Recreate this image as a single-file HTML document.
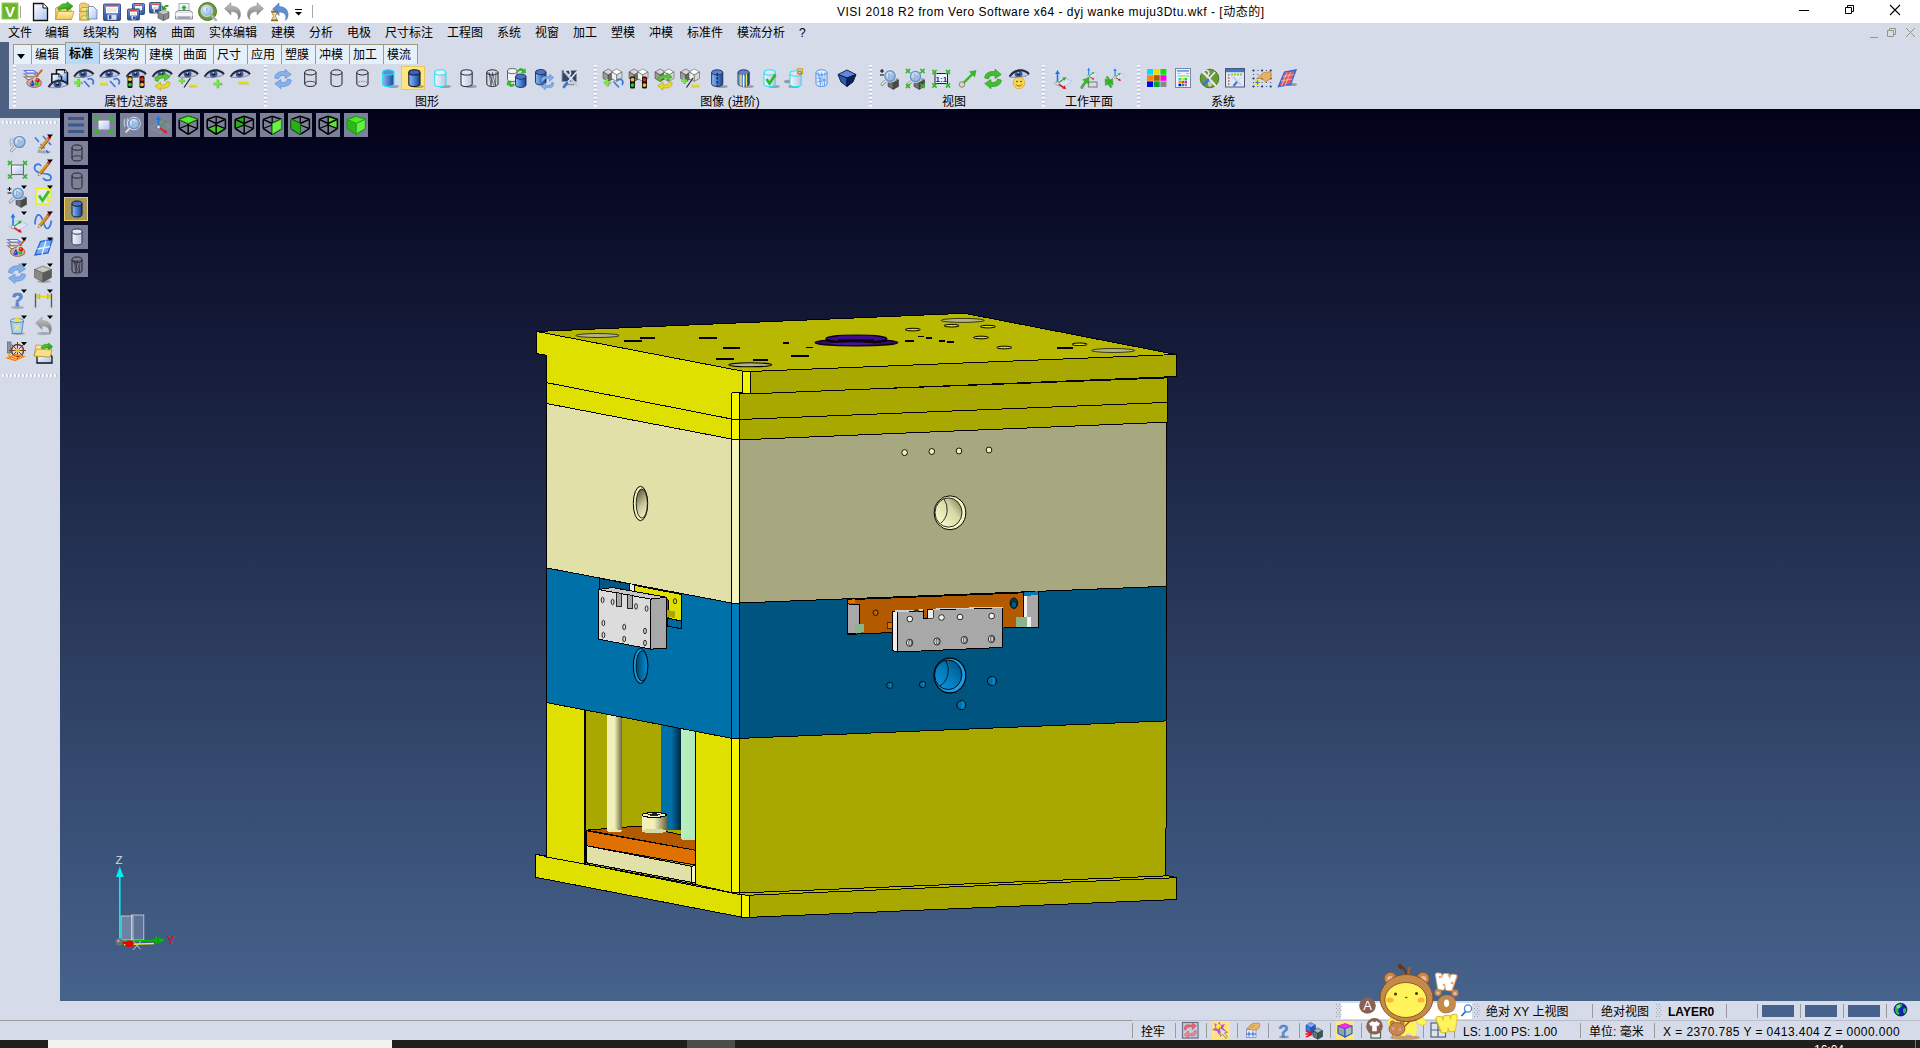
<!DOCTYPE html>
<html lang="zh"><head><meta charset="utf-8"><title>VISI 2018 R2</title><style>
*{box-sizing:border-box;margin:0;padding:0}
html,body{width:1920px;height:1048px;overflow:hidden;background:#d6dbe9}
body{position:relative;font-family:"Liberation Sans","Noto Sans CJK SC",sans-serif;font-size:12px;color:#000;line-height:1}
.abs{position:absolute}
#title{left:0;top:0;width:1920px;height:23px;background:#fff}
#title .t{position:absolute;left:837px;top:6px;font-size:12px;white-space:nowrap;letter-spacing:0.5px}
#menu{left:0;top:23px;width:1920px;height:20px;background:#d6dbe9}
#menu span{position:absolute;top:4px;white-space:nowrap;font-size:12px}
#band1{left:0;top:42px;width:9px;height:68px;background:#4d6082}
#band2{left:0;top:109px;width:60px;height:9px;background:#4d6082}
#tabs{left:13px;top:44px;height:19px}
.tab{position:absolute;top:44px;height:20px;background:#e6f0fb;border:1px solid #a09a84;border-bottom:none;font-size:12px;text-align:center;padding-top:4px;padding-right:3px;white-space:nowrap}
.tab.on{background:#bcd9f6;top:42px;height:22px;padding-top:5px;font-weight:bold}
#tb{left:9px;top:64px;width:1911px;height:45px;background:#d6dbe9}
.grip{position:absolute;width:3px;top:65px;height:42px;background-image:repeating-linear-gradient(#fbfcff 0 1px,#eceff7 1px 2px,#bcc2d2 2px 3px,#d6dbe9 3px 4px)}
.glabel{position:absolute;top:96px;font-size:12px;white-space:nowrap;transform:translateX(-50%)}
#view{left:60px;top:109px;width:1860px;height:892px;background:linear-gradient(#02011a,#46638c)}
#left{left:0;top:118px;width:60px;height:883px;background:#d6dbe9}
.hgrip{position:absolute;left:2px;width:56px;height:3px;background-image:repeating-linear-gradient(90deg,#fbfcff 0 1px,#eceff7 1px 2px,#bcc2d2 2px 3px,#d6dbe9 3px 4px)}
#status{left:0;top:1001px;width:1920px;height:39px;background:#d6dbe9}
#status span{position:absolute;white-space:nowrap;font-size:12px}
.sep{position:absolute;width:1px;background:#9a9a9a}
#task{left:0;top:1040px;width:1920px;height:8px;background:#1f1f1f}
.vb{position:absolute;width:24px;height:24px;background:#7d8099}
</style></head><body>
<div id="title" class="abs"><div class="t">VISI 2018 R2 from Vero Software x64 - dyj wanke muju3Dtu.wkf - [动态的]</div></div>
<svg class="abs" style="left:1780px;top:0" width="140" height="22" viewBox="0 0 140 22"><path d="M19 10.5h10" stroke="#000" fill="none"/><path d="M65.5 7.5h6v6h-6zM67.5 7.5v-2h6v6h-2" stroke="#000" fill="none"/><path d="M110 5l10 10M120 5l-10 10" stroke="#000" fill="none" stroke-width="1.1"/></svg>
<div id="menu" class="abs">
<span style="left:8px">文件</span>
<span style="left:45px">编辑</span>
<span style="left:83px">线架构</span>
<span style="left:133px">网格</span>
<span style="left:171px">曲面</span>
<span style="left:209px">实体编辑</span>
<span style="left:271px">建模</span>
<span style="left:309px">分析</span>
<span style="left:347px">电极</span>
<span style="left:385px">尺寸标注</span>
<span style="left:447px">工程图</span>
<span style="left:497px">系统</span>
<span style="left:535px">视窗</span>
<span style="left:573px">加工</span>
<span style="left:611px">塑模</span>
<span style="left:649px">冲模</span>
<span style="left:687px">标准件</span>
<span style="left:737px">模流分析</span>
<span style="left:799px">?</span>
</div>
<svg class="abs" style="left:1860px;top:24px" width="60" height="18" viewBox="0 0 60 18"><path d="M10 13.5h8" stroke="#9a9484" fill="none"/><path d="M27.5 6.5h6v6h-6zM29.5 6.5v-2h6v6h-2" stroke="#9a9484" fill="none"/><path d="M46 4l9 9M55 4l-9 9" stroke="#9a9484" fill="none"/></svg>
<div id="band1" class="abs"></div><div id="band2" class="abs"></div>
<div class="tab" style="left:13px;width:19px"><svg width="8" height="5" viewBox="0 0 8 5" style="margin-top:4px"><path d="M0 0h8l-4 5z" fill="#000"/></svg></div>
<div class="tab" style="left:31px;width:35px">编辑</div>
<div class="tab on" style="left:65px;width:35px">标准</div>
<div class="tab" style="left:99px;width:47px">线架构</div>
<div class="tab" style="left:145px;width:35px">建模</div>
<div class="tab" style="left:179px;width:35px">曲面</div>
<div class="tab" style="left:213px;width:35px">尺寸</div>
<div class="tab" style="left:247px;width:35px">应用</div>
<div class="tab" style="left:281px;width:35px">塑膜</div>
<div class="tab" style="left:315px;width:35px">冲模</div>
<div class="tab" style="left:349px;width:35px">加工</div>
<div class="tab" style="left:383px;width:35px">模流</div>
<div id="tb" class="abs"></div>
<div class="grip" style="left:13px"></div>
<div class="grip" style="left:264px"></div>
<div class="grip" style="left:594px"></div>
<div class="grip" style="left:869px"></div>
<div class="grip" style="left:1042px"></div>
<div class="grip" style="left:1137px"></div>
<div class="glabel" style="left:136px">属性/过滤器</div>
<div class="glabel" style="left:427px">图形</div>
<div class="glabel" style="left:730px">图像 (进阶)</div>
<div class="glabel" style="left:954px">视图</div>
<div class="glabel" style="left:1089px">工作平面</div>
<div class="glabel" style="left:1223px">系统</div>
<div id="view" class="abs"></div>
<div id="left" class="abs"><div class="hgrip" style="top:3px"></div><div class="hgrip" style="top:256px"></div></div>
<svg class="abs" style="left:60px;top:108px" width="1860" height="893" viewBox="60 108 1860 893" shape-rendering="crispEdges">
<defs><linearGradient id="gcream" x1="0" x2="1"><stop offset="0" stop-color="#f0f0b8"/><stop offset=".5" stop-color="#f0f0b8"/><stop offset="1" stop-color="#6a6a48"/></linearGradient><linearGradient id="gblue" x1="0" x2="1"><stop offset="0" stop-color="#0070a8"/><stop offset=".5" stop-color="#0070a8"/><stop offset="1" stop-color="#00283c"/></linearGradient><linearGradient id="ggreen" x1="0" x2="1"><stop offset="0" stop-color="#b8f0c0"/><stop offset="1" stop-color="#b0e8b8"/></linearGradient><linearGradient id="ghole" x1="0" x2="1"><stop offset="0" stop-color="#00486c"/><stop offset="1" stop-color="#0090d8"/></linearGradient><linearGradient id="ghole2" x1="0" x2="1"><stop offset="0" stop-color="#1098e0"/><stop offset="1" stop-color="#0068a0"/></linearGradient><linearGradient id="gbh" x1="0.2" y1="0" x2="0.6" y2="1"><stop offset="0" stop-color="#58583c"/><stop offset=".6" stop-color="#c8c898"/><stop offset="1" stop-color="#f0f0bc"/></linearGradient><linearGradient id="gbh2" x1="1" y1="0" x2="0.1" y2="0.8"><stop offset="0" stop-color="#6c6c4c"/><stop offset=".45" stop-color="#d8d8a4"/><stop offset="1" stop-color="#f8f8c8"/></linearGradient><linearGradient id="ghole3" x1="1" y1="0" x2="0.1" y2="0.9"><stop offset="0" stop-color="#004870"/><stop offset=".5" stop-color="#0078b8"/><stop offset="1" stop-color="#1490d8"/></linearGradient></defs>
<polygon points="535.6,854.4 741.6,894.9 741.6,917.1 535.6,877.3" fill="#e0e000" stroke="#000" stroke-width="1" />
<polygon points="749.6,895.2 1176.4,877.7 1176.4,899.5 749.6,917.3" fill="#a8a800" stroke="#000" stroke-width="1" />
<polygon points="741.6,894.9 749.6,895.2 749.6,917.3 741.6,917.1" fill="#f4f400" stroke="#000" stroke-width="1" />
<polygon points="535.6,854.4 547.0,856.0 731.8,891.6 739.8,892.0 1165.0,875.0 1176.4,877.7 749.6,895.2 741.6,894.9" fill="#b8b800" stroke="#000" stroke-width="1" />
<polygon points="584.8,709.9 695.8,731.4 695.8,884.6 584.8,864.0" fill="#a8a800" stroke="#000" stroke-width="1" />
<polygon points="586.4,845.7 691.7,866.3 691.7,882.3 586.4,862.8" fill="#e0e0a8" stroke="#000" stroke-width="1" />
<polygon points="691.7,866.3 695.8,865.5 695.8,883.0 691.7,882.3" fill="#f4f4bc" stroke="#000" stroke-width="1" />
<polygon points="586.4,830.1 640.0,826.0 695.8,838.0 695.8,850.3" fill="#b35a00" stroke="#000" stroke-width="1" />
<polygon points="586.4,830.8 695.8,850.3 695.8,865.1 586.4,845.7" fill="#e07000" stroke="#000" stroke-width="1" />
<rect x="607" y="714" width="14.9" height="116.8" fill="url(#gcream)" stroke="none"/>
<rect x="661.3" y="724.7" width="19.7" height="105" fill="url(#gblue)" stroke="none"/>
<rect x="681" y="728.5" width="14.8" height="110.3" fill="url(#ggreen)" stroke="none"/>
<ellipse cx="688.4" cy="838.8" rx="7.4" ry="1.6" fill="#b0e8b8" />
<ellipse cx="614.4" cy="830.8" rx="7.4" ry="1.4" fill="#e8e8b0" />
<rect x="642" y="815" width="24.5" height="16" fill="url(#gcream)" stroke="none"/>
<ellipse cx="654.2" cy="831.0" rx="12.2" ry="2.2" fill="#d8d8a0" />
<ellipse cx="654.2" cy="815.0" rx="12.2" ry="2.4" fill="#f0f0b8" stroke="#000" stroke-width="1" />
<ellipse cx="654.2" cy="814.6" rx="6.0" ry="1.2" fill="#222" />
<polygon points="546.9,702.6 584.8,709.9 584.8,864.0 546.9,857.1" fill="#e0e000" stroke="#000" stroke-width="1" />
<polygon points="695.8,731.4 731.6,738.3 731.6,892.6 695.8,884.6" fill="#e0e000" stroke="#000" stroke-width="1" />
<line x1="585.6" y1="710.0" x2="585.6" y2="864.0" stroke="#000" stroke-width="1.6"/>
<polygon points="546.9,568.0 731.6,603.0 731.6,738.3 546.9,702.6" fill="#0070a8" stroke="#000" stroke-width="1" />
<polygon points="546.9,403.6 731.6,439.0 731.6,603.0 546.9,568.0" fill="#e0e0a8" stroke="#000" stroke-width="1" />
<polygon points="546.9,355.3 731.6,392.1 731.6,419.0 546.9,382.7" fill="#e0e000" />
<line x1="546.9" y1="355.3" x2="546.9" y2="382.7" stroke="#000" stroke-width="1"/>
<line x1="731.6" y1="392.5" x2="731.6" y2="419.0" stroke="#000" stroke-width="1"/>
<polygon points="546.9,382.7 731.6,419.0 731.6,439.0 546.9,403.6" fill="#e0e000" stroke="#000" stroke-width="1" />
<polygon points="731.6,392.1 739.6,392.5 739.6,439.9 731.6,439.0" fill="#f4f400" stroke="#000" stroke-width="1" />
<line x1="731.6" y1="419.2" x2="739.6" y2="419.5" stroke="#000" stroke-width="1"/>
<polygon points="731.6,439.0 739.6,439.9 739.6,603.0 731.6,603.0" fill="#f4f4bc" stroke="#000" stroke-width="1" />
<polygon points="731.6,603.0 739.6,603.0 739.6,738.4 731.6,738.3" fill="#007cbc" stroke="#000" stroke-width="1" />
<polygon points="731.6,738.3 739.6,738.4 739.6,893.0 731.6,892.6" fill="#f4f400" stroke="#000" stroke-width="1" />
<polygon points="739.6,393.9 1167.0,377.9 1167.0,402.4 739.6,419.5" fill="#a8a800" stroke="#000" stroke-width="1" />
<polygon points="739.6,419.5 1167.0,402.4 1167.0,422.2 739.6,439.9" fill="#a8a800" stroke="#000" stroke-width="1" />
<polygon points="739.6,439.9 1167.0,422.2 1166.7,586.3 739.6,603.0" fill="#a8a880" stroke="#000" stroke-width="1" />
<polygon points="739.6,603.0 1166.7,586.3 1166.5,720.9 739.6,738.4" fill="#005480" stroke="#000" stroke-width="1" />
<polygon points="739.6,738.4 1166.5,720.9 1165.8,875.9 739.8,893.0" fill="#a8a800" stroke="#000" stroke-width="1" />
<polygon points="536.8,331.5 742.8,371.2 742.8,393.2 731.6,392.6 546.9,355.8 536.8,353.6" fill="#e0e000" />
<polyline points="731.6,392.5 742.8,392.5 742.8,371.2 536.8,331.5 536.8,353.6 546.9,355.4 546.9,358" fill="none" stroke="#000" stroke-width="1"/>
<polygon points="750.2,371.5 1176.1,354.5 1176.1,376.5 750.2,393.9" fill="#a8a800" stroke="#000" stroke-width="1" />
<polygon points="742.8,371.2 750.2,371.5 750.2,393.9 742.8,393.9" fill="#f4f400" stroke="#000" stroke-width="1" />
<polygon points="536.8,331.5 964.5,313.3 1176.1,354.5 750.2,371.5 742.8,371.2" fill="#b8b800" stroke="#000" stroke-width="1" />
<g shape-rendering="auto">
<ellipse cx="597.5" cy="335.5" rx="21.5" ry="2.0" fill="#b4b48c" stroke="#000" stroke-width="0.7" />
<ellipse cx="597.5" cy="335.5" rx="21.5" ry="2.0" fill="none" stroke="#d8d800" stroke-width="0.0" />
<ellipse cx="750.3" cy="364.8" rx="21.5" ry="2.0" fill="#b4b48c" stroke="#000" stroke-width="1.1" />
<ellipse cx="750.3" cy="364.8" rx="21.5" ry="2.0" fill="none" stroke="#d8d800" stroke-width="0.0" />
<ellipse cx="962.7" cy="320.4" rx="21.5" ry="2.0" fill="#b4b48c" stroke="#000" stroke-width="0.7" />
<ellipse cx="962.7" cy="320.4" rx="21.5" ry="2.0" fill="none" stroke="#d8d800" stroke-width="0.0" />
<ellipse cx="1113.2" cy="350.5" rx="21.5" ry="2.0" fill="#b4b48c" stroke="#000" stroke-width="0.7" />
<ellipse cx="1113.2" cy="350.5" rx="21.5" ry="2.0" fill="none" stroke="#d8d800" stroke-width="0.0" />
<rect x="640.0" y="337.0" width="15.0" height="1.7" fill="#000" shape-rendering="crispEdges"/>
<rect x="624.0" y="340.0" width="17.7" height="1.7" fill="#000" shape-rendering="crispEdges"/>
<rect x="699.0" y="337.0" width="17.7" height="1.7" fill="#000" shape-rendering="crispEdges"/>
<rect x="723.0" y="347.0" width="17.0" height="1.7" fill="#000" shape-rendering="crispEdges"/>
<rect x="716.0" y="358.0" width="17.8" height="1.7" fill="#000" shape-rendering="crispEdges"/>
<rect x="753.3" y="358.9" width="14.7" height="1.7" fill="#000" shape-rendering="crispEdges"/>
<rect x="791.0" y="355.0" width="17.8" height="1.7" fill="#000" shape-rendering="crispEdges"/>
<rect x="783.3" y="342.2" width="5.5" height="1.7" fill="#000" shape-rendering="crispEdges"/>
<rect x="806.0" y="346.5" width="6.8" height="1.7" fill="#000" shape-rendering="crispEdges"/>
<rect x="905.0" y="339.9" width="9.0" height="1.7" fill="#000" shape-rendering="crispEdges"/>
<rect x="918.0" y="335.5" width="6.0" height="1.7" fill="#000" shape-rendering="crispEdges"/>
<rect x="926.0" y="337.2" width="6.0" height="1.7" fill="#000" shape-rendering="crispEdges"/>
<rect x="939.0" y="339.9" width="6.0" height="1.7" fill="#000" shape-rendering="crispEdges"/>
<rect x="947.0" y="341.3" width="7.0" height="1.7" fill="#000" shape-rendering="crispEdges"/>
<rect x="1057.0" y="347.0" width="16.0" height="1.7" fill="#000" shape-rendering="crispEdges"/>
<ellipse cx="912.8" cy="329.6" rx="7.5" ry="1.3" fill="#e0e000" stroke="#000" stroke-width="1.0" />
<ellipse cx="951.6" cy="325.7" rx="7.5" ry="1.3" fill="#e0e000" stroke="#000" stroke-width="1.0" />
<ellipse cx="987.9" cy="326.6" rx="7.5" ry="1.3" fill="#e0e000" stroke="#000" stroke-width="1.0" />
<ellipse cx="981.0" cy="337.5" rx="7.5" ry="1.3" fill="#e0e000" stroke="#000" stroke-width="1.0" />
<ellipse cx="1004.3" cy="347.5" rx="7.5" ry="1.3" fill="#e0e000" stroke="#000" stroke-width="1.0" />
<ellipse cx="1079.6" cy="344.3" rx="7.5" ry="1.3" fill="#e0e000" stroke="#000" stroke-width="1.0" />
<ellipse cx="856.4" cy="342.6" rx="41.4" ry="3.3" fill="#34086c" stroke="#000" stroke-width="1.2" />
<ellipse cx="856.4" cy="338.6" rx="30.5" ry="3.6" fill="#420a8e" stroke="#000" stroke-width="1.2" />
<path d="M826 339.5 C835 343.5 878 343.5 887 339.5 L887 341 C878 345 835 345 826 341Z" fill="#000"/>
<rect x="838" y="339.4" width="36" height="2.2" fill="#000"/>
<ellipse cx="852.0" cy="343.6" rx="22.0" ry="1.3" fill="#4a10a0" />
<ellipse cx="640.5" cy="503.5" rx="7.2" ry="17.2" fill="#f4f4c0" stroke="#000" stroke-width="1" />
<ellipse cx="641.8" cy="503.5" rx="5.6" ry="14.6" fill="url(#gbh)" stroke="#000" stroke-width="0.8" />
<ellipse cx="950.0" cy="512.8" rx="15.8" ry="17.0" fill="#f4f4c0" stroke="#000" stroke-width="1" />
<ellipse cx="948.5" cy="512.5" rx="13.5" ry="14.6" fill="url(#gbh2)" stroke="#000" stroke-width="0.8" />
<path d="M944 499a18 18 0 0 1 -3 24" fill="none" stroke="#000" stroke-width="0.8"/>
<ellipse cx="904.6" cy="452.6" rx="2.8" ry="3.0" fill="#f0f0bc" stroke="#000" stroke-width="0.9" />
<ellipse cx="931.8" cy="451.5" rx="2.8" ry="3.0" fill="#f0f0bc" stroke="#000" stroke-width="0.9" />
<ellipse cx="959.0" cy="451.0" rx="2.8" ry="3.0" fill="#f0f0bc" stroke="#000" stroke-width="0.9" />
<ellipse cx="989.0" cy="450.0" rx="2.8" ry="3.0" fill="#f0f0bc" stroke="#000" stroke-width="0.9" />
<ellipse cx="640.6" cy="665.9" rx="7.3" ry="17.6" fill="#1098e0" stroke="#000" stroke-width="1" />
<ellipse cx="642.0" cy="665.9" rx="5.8" ry="15.2" fill="url(#ghole)" stroke="#000" stroke-width="0.8" />
<ellipse cx="949.9" cy="675.5" rx="15.9" ry="17.4" fill="#1c9ce4" stroke="#000" stroke-width="1.2" />
<ellipse cx="948.2" cy="674.8" rx="13.6" ry="14.8" fill="url(#ghole3)" stroke="#000" stroke-width="0.9" />
<path d="M946 661a19 19 0 0 1 -6 25" fill="none" stroke="#000" stroke-width="0.8"/>
<ellipse cx="889.6" cy="685.4" rx="3.0" ry="3.0" fill="#0070a8" stroke="#000" stroke-width="1.0" />
<path d="M890.1 682.4a2.4 3.0 0 0 1 0 6.0" fill="#0088cc" stroke="#000" stroke-width=".6"/>
<ellipse cx="922.4" cy="684.5" rx="3.0" ry="3.0" fill="#0070a8" stroke="#000" stroke-width="1.0" />
<path d="M922.9 681.5a2.4 3.0 0 0 1 0 6.0" fill="#0088cc" stroke="#000" stroke-width=".6"/>
<ellipse cx="991.9" cy="681.0" rx="4.5" ry="4.5" fill="#0070a8" stroke="#000" stroke-width="1.0" />
<path d="M992.4 676.5a3.6 4.5 0 0 1 0 9.0" fill="#0088cc" stroke="#000" stroke-width=".6"/>
<ellipse cx="961.3" cy="705.1" rx="4.5" ry="4.5" fill="#0070a8" stroke="#000" stroke-width="1.0" />
<path d="M961.8 700.6a3.6 4.5 0 0 1 0 9.0" fill="#0088cc" stroke="#000" stroke-width=".6"/>
</g>
<polygon points="599.2,578.2 629.7,583.9 629.7,600.0 599.2,595.0" fill="#005888" stroke="#000" stroke-width="1" />
<polygon points="629.7,584.0 634.5,585.0 634.5,600.0 629.7,599.0" fill="#f0f0f0" />
<polygon points="634.5,585.4 681.2,594.4 681.2,628.7 668.0,626.0 668.0,600.0 634.5,594.0" fill="#e0e000" stroke="#000" stroke-width="1" />
<polygon points="667.0,610.0 675.0,611.5 675.0,618.0 667.0,616.5" fill="#a8a800" />
<polygon points="667.0,618.0 681.2,621.0 681.2,628.7 667.0,626.0" fill="#0068a0" stroke="#000" stroke-width="1" />
<polygon points="598.6,589.6 650.7,599.1 650.7,649.1 598.6,639.2" fill="#dcdcdc" stroke="#000" stroke-width="1" />
<polygon points="650.7,599.1 666.5,597.2 666.5,648.4 650.7,649.1" fill="#a8a8a8" stroke="#000" stroke-width="1" />
<polygon points="598.6,589.6 612.0,587.5 666.5,597.2 650.7,599.1" fill="#c8c8c8" stroke="#000" stroke-width="1" />
<polygon points="616.0,592.5 621.0,593.4 621.0,607.0 616.0,606.0" fill="#a8a8a8" stroke="#000" stroke-width="0.8" />
<polygon points="627.0,594.5 632.0,595.4 632.0,609.0 627.0,608.0" fill="#a8a8a8" stroke="#000" stroke-width="0.8" />
<g shape-rendering="auto">
<ellipse cx="602.6" cy="600.0" rx="1.4" ry="2.8" fill="#dcdcdc" stroke="#000" stroke-width="0.8" />
<ellipse cx="612.6" cy="602.0" rx="1.4" ry="2.8" fill="#dcdcdc" stroke="#000" stroke-width="0.8" />
<ellipse cx="636.0" cy="606.4" rx="1.4" ry="2.8" fill="#dcdcdc" stroke="#000" stroke-width="0.8" />
<ellipse cx="646.6" cy="608.6" rx="1.4" ry="2.8" fill="#dcdcdc" stroke="#000" stroke-width="0.8" />
<ellipse cx="603.4" cy="623.0" rx="1.4" ry="2.8" fill="#dcdcdc" stroke="#000" stroke-width="0.8" />
<ellipse cx="624.2" cy="627.0" rx="1.4" ry="2.8" fill="#dcdcdc" stroke="#000" stroke-width="0.8" />
<ellipse cx="645.0" cy="631.0" rx="1.4" ry="2.8" fill="#dcdcdc" stroke="#000" stroke-width="0.8" />
<ellipse cx="603.4" cy="635.0" rx="1.4" ry="2.8" fill="#dcdcdc" stroke="#000" stroke-width="0.8" />
<ellipse cx="624.2" cy="639.0" rx="1.4" ry="2.8" fill="#dcdcdc" stroke="#000" stroke-width="0.8" />
<ellipse cx="645.0" cy="643.0" rx="1.4" ry="2.8" fill="#dcdcdc" stroke="#000" stroke-width="0.8" />
<ellipse cx="675.0" cy="601.2" rx="1.6" ry="2.6" fill="#e0e000" stroke="#000" stroke-width="0.8" />
</g>
<polygon points="847.6,599.7 1023.2,592.8 1023.2,627.2 847.6,634.4" fill="#b35a00" stroke="#000" stroke-width="1" />
<polygon points="847.6,603.9 859.6,604.9 859.6,632.5 847.6,634.0" fill="#a8a8a8" stroke="#000" stroke-width="1" />
<polygon points="847.6,599.7 855.0,599.4 855.0,602.5 847.6,603.0" fill="#e07000" />
<polygon points="854.5,624.0 863.5,623.6 863.5,632.4 854.5,632.8" fill="#8cb48c" />
<polygon points="1023.7,594.4 1038.0,592.8 1038.0,627.2 1023.7,627.2" fill="#a8a8a8" stroke="#000" stroke-width="1" />
<polygon points="1023.7,594.4 1027.0,594.2 1027.0,620.0 1023.7,620.0" fill="#f0f0f0" />
<polygon points="1023.7,592.6 1038.0,591.2 1038.0,595.0 1023.7,596.0" fill="#0078b8" />
<polygon points="1016.0,617.5 1027.0,617.0 1027.0,626.6 1016.0,627.2" fill="#8cb48c" />
<polygon points="1027.0,617.5 1031.0,617.3 1031.0,626.8 1027.0,626.8" fill="#f0f0f0" />
<polygon points="887.0,623.0 893.0,622.8 893.0,628.0 887.0,628.2" fill="#e07000" stroke="#000" stroke-width="0.6" />
<polygon points="897.8,611.9 923.0,611.0 923.0,618.5 927.5,618.3 927.5,609.8 1002.7,607.7 1002.7,647.4 897.8,652.0" fill="#a8a8a8" stroke="#000" stroke-width="1" />
<polygon points="892.0,611.2 897.8,611.9 897.8,652.0 892.0,650.5" fill="#ececec" stroke="#000" stroke-width="1" />
<polygon points="892.0,611.2 897.0,610.2 923.0,609.2 923.0,611.0 897.8,611.9" fill="#d0d0d0" />
<polygon points="927.5,609.8 933.0,609.6 933.0,618.0 927.5,618.3" fill="#ececec" stroke="#000" stroke-width="0.6" />
<polygon points="933.0,608.6 1002.0,606.5 1002.7,607.7 933.0,609.7" fill="#d0d0d0" />
<g shape-rendering="auto">
<ellipse cx="909.8" cy="619.0" rx="2.8" ry="2.8" fill="#f4f4f4" stroke="#000" stroke-width="0.8" />
<ellipse cx="941.5" cy="617.5" rx="2.8" ry="2.8" fill="#f4f4f4" stroke="#000" stroke-width="0.8" />
<ellipse cx="960.0" cy="617.0" rx="2.8" ry="2.8" fill="#f4f4f4" stroke="#000" stroke-width="0.8" />
<ellipse cx="991.7" cy="616.0" rx="2.8" ry="2.8" fill="#f4f4f4" stroke="#000" stroke-width="0.8" />
<ellipse cx="909.6" cy="642.8" rx="3.2" ry="3.6" fill="#f4f4f4" stroke="#000" stroke-width="0.8" />
<ellipse cx="910.2" cy="642.8" rx="1.6" ry="3.0" fill="#c8c8c8" stroke="#000" stroke-width="0.6" />
<ellipse cx="937.0" cy="641.5" rx="3.2" ry="3.6" fill="#f4f4f4" stroke="#000" stroke-width="0.8" />
<ellipse cx="937.6" cy="641.5" rx="1.6" ry="3.0" fill="#c8c8c8" stroke="#000" stroke-width="0.6" />
<ellipse cx="964.3" cy="640.0" rx="3.2" ry="3.6" fill="#f4f4f4" stroke="#000" stroke-width="0.8" />
<ellipse cx="964.9" cy="640.0" rx="1.6" ry="3.0" fill="#c8c8c8" stroke="#000" stroke-width="0.6" />
<ellipse cx="991.5" cy="639.0" rx="3.2" ry="3.6" fill="#f4f4f4" stroke="#000" stroke-width="0.8" />
<ellipse cx="992.1" cy="639.0" rx="1.6" ry="3.0" fill="#c8c8c8" stroke="#000" stroke-width="0.6" />
<ellipse cx="875.6" cy="612.8" rx="2.5" ry="2.8" fill="#c86400" stroke="#000" stroke-width="0.8" />
<ellipse cx="1013.9" cy="603.2" rx="3.8" ry="5.2" fill="#003c5c" stroke="#000" stroke-width="0.8" />
<ellipse cx="1013.9" cy="604.6" rx="2.8" ry="3.4" fill="#005c8c" stroke="#000" stroke-width="0.6" />
<ellipse cx="916.5" cy="610.5" rx="2.6" ry="1.6" fill="#5a2c00" />
</g>
<g shape-rendering="auto">
<rect x="121" y="916" width="12" height="24" fill="#a8b0c8" fill-opacity=".45" stroke="#d8d8d8" stroke-width="0.8"/>
<rect x="131.5" y="915" width="12.3" height="25" fill="#a8b0c8" fill-opacity=".28" stroke="#d8d8d8" stroke-width="0.8"/>
<line x1="119.8" y1="875.0" x2="119.8" y2="941.0" stroke="#00f0f0" stroke-width="1.6"/>
<polygon points="119.8,866.5 116,877 123.8,877" fill="#00f0f0"/>
<line x1="124.0" y1="944.5" x2="154.0" y2="943.5" stroke="#f0f000" stroke-width="1.6"/>
<line x1="122.0" y1="941.6" x2="158.0" y2="940.4" stroke="#00c000" stroke-width="1.8"/>
<polygon points="165,940.2 155.5,936.2 155.5,944.6" fill="#00c000"/>
<polygon points="157.5,935.5 157.5,945 159,940.2" fill="#008800"/>
<line x1="120.0" y1="942.0" x2="130.0" y2="944.0" stroke="#e00000" stroke-width="2.2"/>
<ellipse cx="129.5" cy="943.8" rx="4.2" ry="3.4" fill="#f00000" />
<circle cx="119.2" cy="941.9" r="3.6" fill="#707070"/><circle cx="118.3" cy="940.9" r="1.3" fill="#a8a8a8"/>
<path d="M133.5 941.5l7 8M141 941l-8 9" stroke="#d0d0d0" stroke-width="0.9" fill="none"/>
<text x="115.4" y="864" font-family="Liberation Sans,sans-serif" font-size="11.5" fill="#d8d8d8">Z</text>
<text x="166.8" y="944" font-family="Liberation Sans,sans-serif" font-size="11.5" fill="#f00000">Y</text>
</g>
</svg>
<div id="status" class="abs">
<div class="abs" style="left:0;top:19px;width:1132px;height:1px;background:#9a9a9a"></div>
<div class="abs" style="left:1132px;top:19px;width:788px;height:1px;background:#b8bccb"></div>
<div class="abs" style="left:1341px;top:2px;width:131px;height:16px;background:#fff"></div>
<span style="left:1486px;top:5px">绝对 XY 上视图</span>
<span style="left:1601px;top:5px">绝对视图</span>
<span style="left:1668px;top:5px;font-weight:bold">LAYER0</span>
<div class="sep" style="left:1592px;top:3px;height:14px"></div>
<div class="sep" style="left:1726px;top:3px;height:14px"></div>
<div class="sep" style="left:1757px;top:3px;height:14px"></div>
<div class="sep" style="left:1800px;top:3px;height:14px"></div>
<div class="sep" style="left:1843px;top:3px;height:14px"></div>
<div class="sep" style="left:1886px;top:3px;height:14px"></div>
<div class="abs" style="left:1762px;top:4px;width:32px;height:12px;background:#45618c"></div>
<div class="abs" style="left:1805px;top:4px;width:32px;height:12px;background:#45618c"></div>
<div class="abs" style="left:1848px;top:4px;width:32px;height:12px;background:#45618c"></div>
<span style="left:1141px;top:25px">拴牢</span>
<span style="left:1463px;top:25px">LS: 1.00 PS: 1.00</span>
<span style="left:1589px;top:25px">单位: 毫米</span>
<span style="left:1663px;top:25px;letter-spacing:.43px">X = 2370.785 Y = 0413.404 Z = 0000.000</span>
<div class="sep" style="left:1132px;top:22px;height:15px"></div>
<div class="sep" style="left:1175px;top:22px;height:15px"></div>
<div class="sep" style="left:1206px;top:22px;height:15px"></div>
<div class="sep" style="left:1237px;top:22px;height:15px"></div>
<div class="sep" style="left:1268px;top:22px;height:15px"></div>
<div class="sep" style="left:1299px;top:22px;height:15px"></div>
<div class="sep" style="left:1330px;top:22px;height:15px"></div>
<div class="sep" style="left:1361px;top:22px;height:15px"></div>
<div class="sep" style="left:1392px;top:22px;height:15px"></div>
<div class="sep" style="left:1423px;top:22px;height:15px"></div>
<div class="sep" style="left:1454px;top:22px;height:15px"></div>
<div class="sep" style="left:1580px;top:22px;height:15px"></div>
<div class="sep" style="left:1654px;top:22px;height:15px"></div>
</div>
<div id="task" class="abs"><div class="abs" style="left:48px;top:0;width:344px;height:8px;background:#f2f2f2"></div><div class="abs" style="left:687px;top:0;width:48px;height:8px;background:#4c4c4c"></div><div class="abs" style="left:1915px;top:0;width:1px;height:8px;background:#777"></div><div class="abs" style="left:1814px;top:4px;color:#fff;font-size:12px;white-space:nowrap">16:04</div></div>
<svg class="abs" style="left:0;top:0;pointer-events:none" width="1920" height="1048" viewBox="0 0 1920 1048">
<defs><linearGradient id="cb" x1="0" x2="1"><stop offset="0" stop-color="#8fb8f0"/><stop offset=".45" stop-color="#4f86d8"/><stop offset="1" stop-color="#1d3f86"/></linearGradient><linearGradient id="cw" x1="0" x2="1"><stop offset="0" stop-color="#f4f7ff"/><stop offset="1" stop-color="#b8c4e0"/></linearGradient><linearGradient id="cy2" x1="0" x2="1"><stop offset="0" stop-color="#dcdca0"/><stop offset=".5" stop-color="#c8c880"/><stop offset="1" stop-color="#6a6a4a"/></linearGradient><linearGradient id="pg" x1="0" y1="0" x2="1" y2="1"><stop offset="0" stop-color="#ffffff"/><stop offset="1" stop-color="#a9c3f2"/></linearGradient><linearGradient id="pgb" x1="0" y1="0" x2="1" y2="1"><stop offset="0" stop-color="#ffffff"/><stop offset=".35" stop-color="#dce8fc"/><stop offset="1" stop-color="#4a80e0"/></linearGradient><linearGradient id="fl" x1="0" y1="0" x2="0" y2="1"><stop offset="0" stop-color="#6f93d8"/><stop offset="1" stop-color="#2c4f9c"/></linearGradient><linearGradient id="gr" x1="0" y1="0" x2="1" y2="1"><stop offset="0" stop-color="#58e638"/><stop offset="1" stop-color="#189010"/></linearGradient><linearGradient id="fo" x1="0" y1="0" x2="0" y2="1"><stop offset="0" stop-color="#fff0a8"/><stop offset="1" stop-color="#f0c860"/></linearGradient><linearGradient id="gy" x1="0" y1="0" x2="0" y2="1"><stop offset="0" stop-color="#c8c8c8"/><stop offset="1" stop-color="#707070"/></linearGradient><radialGradient id="gl" cx=".4" cy=".35" r=".7"><stop offset="0" stop-color="#e8f4ff"/><stop offset="1" stop-color="#7aa6dc"/></radialGradient></defs>
<rect x="2" y="3" width="16" height="16" fill="#6cb52d"/><rect x="2" y="3" width="16" height="16" fill="none" stroke="#8fd04a" stroke-width="1"/>
<text x="10" y="16.5" text-anchor="middle" font-family="Liberation Sans,sans-serif" font-weight="bold" font-size="15" fill="#fff">V</text>
<path d="M20.5 6v12M312.5 5v13" stroke="#a8a8a8"/>
<path d="M33.5 3.5h9.5l4.5 4.5v12.5h-14z" fill="url(#pg)" stroke="#111" stroke-width="1.3"/><path d="M43.0 3.5v4.5h4.5" fill="#fff" stroke="#111" stroke-width="1"/>
<path d="M55.5 19.5v-11l1.5-1.5h5l1.5 1.5h7.5v11z" fill="#f0cc70" stroke="#c09a38" stroke-width=".7"/><path d="M55.5 19.5l2.5-8h16l-2.5 8z" fill="url(#fo)" stroke="#b08a28" stroke-width=".7"/>
<path d="M58 9c1-4 5-6 9-5.2l0-2 6 4.5-6 4.5 0-2.4c-3-.6-5.5 0-7 2z" fill="url(#gr)" stroke="#157a10" stroke-width=".6"/>
<path d="M79.5 11.5v-7l1.5-1.5h5l1.5 1.5h1.5v7z" fill="#f0cc70" stroke="#c09a38" stroke-width=".7"/><path d="M79.5 11.5l2.5-4h10l-2.5 4z" fill="url(#fo)" stroke="#b08a28" stroke-width=".7"/><path d="M79.5 20v-7l1.5-1.5h5l1.5 1.5h1.5v7z" fill="#f0cc70" stroke="#c09a38" stroke-width=".7"/><path d="M79.5 20l2.5-4h10l-2.5 4z" fill="url(#fo)" stroke="#b08a28" stroke-width=".7"/>
<path d="M88.5 6.5h5l3.5 3.5v9h-8.5z" fill="url(#pg)" stroke="#6a7a98" stroke-width=".8"/><path d="M87 8.5v10.5h3" fill="none" stroke="#58c040" stroke-width="1"/>
<rect x="103.5" y="4" width="17" height="16.5" rx="1" fill="url(#fl)" stroke="#22386e" stroke-width=".8"/><rect x="106.0" y="5" width="12" height="8.25" fill="#fff"/><rect x="106.0" y="5" width="12" height="1.6" fill="#e04a3a"/><path d="M107.0 9h10M107.0 11h10" stroke="#b9c2d8" stroke-width=".7"/><rect x="107.5" y="14.56" width="9" height="5.28" fill="#d8dde8"/><rect x="109.0" y="15.22" width="2.4" height="3.96" fill="#2c4f9c"/>
<rect x="132.5" y="3.5" width="12" height="11" rx="1" fill="url(#fl)" stroke="#22386e" stroke-width=".8"/><rect x="135.0" y="4.5" width="7" height="5.5" fill="#fff"/><rect x="135.0" y="4.5" width="7" height="1.6" fill="#e04a3a"/><path d="M136.0 8.5h5M136.0 10.5h5" stroke="#b9c2d8" stroke-width=".7"/><rect x="136.5" y="10.54" width="4" height="3.52" fill="#d8dde8"/><rect x="138.0" y="10.98" width="2.4" height="2.6399999999999997" fill="#2c4f9c"/><rect x="127.5" y="9" width="12" height="11" rx="1" fill="url(#fl)" stroke="#22386e" stroke-width=".8"/><rect x="130.0" y="10" width="7" height="5.5" fill="#fff"/><rect x="130.0" y="10" width="7" height="1.6" fill="#e04a3a"/><path d="M131.0 14h5M131.0 16h5" stroke="#b9c2d8" stroke-width=".7"/><rect x="131.5" y="16.04" width="4" height="3.52" fill="#d8dde8"/><rect x="133.0" y="16.48" width="2.4" height="2.6399999999999997" fill="#2c4f9c"/>
<rect x="149.5" y="2.5" width="11.5" height="10.5" rx="1" fill="url(#fl)" stroke="#22386e" stroke-width=".8"/><rect x="152.0" y="3.5" width="6.5" height="5.25" fill="#fff"/><rect x="152.0" y="3.5" width="6.5" height="1.6" fill="#e04a3a"/><path d="M153.0 7.5h4.5M153.0 9.5h4.5" stroke="#b9c2d8" stroke-width=".7"/><rect x="153.5" y="9.219999999999999" width="3.5" height="3.36" fill="#d8dde8"/><rect x="155.0" y="9.64" width="2.4" height="2.52" fill="#2c4f9c"/>
<path d="M163 9.5c1-3 3.5-4 5.5-3.5M163 9.5l-.8-3.6M163 9.5l3.4-1" stroke="#2aa020" stroke-width="1.6" fill="none"/>
<path d="M158 12l5.5-2 5.5 2v6l-5.5 2.6-5.5-2.6z" fill="#8a8a8a" stroke="#444" stroke-width=".6"/><path d="M158 12l5.5 2.4 5.5-2.4M163.5 14.4v6" stroke="#444" stroke-width=".6" fill="none"/><path d="M158 12l5.5-2 5.5 2-5.5 2.4z" fill="#c4c4c4"/>
<rect x="179" y="3.5" width="10" height="9" fill="#eef2fa" stroke="#8a94a8" stroke-width=".7"/><path d="M184 5l3 3.2h-1.8v2.6h-2.4v-2.600h-1.800z" fill="#2cb820"/>
<path d="M175.500 12.500l2.500-2h12l2.500 2v6.500h-17z" fill="#e0e2e8" stroke="#70757f" stroke-width=".8"/><rect x="175.500" y="13" width="17" height="3" fill="#f6f7fa"/><rect x="177.500" y="16.500" width="13" height="2" fill="#9a9ea8"/>
<circle cx="207.500" cy="11.500" r="9" fill="#6a9a3a"/><circle cx="207.500" cy="11.500" r="9" fill="none" stroke="#4a7a22" stroke-width="1"/><circle cx="206.800" cy="10.800" r="5.600" fill="url(#gl)" stroke="#c8d0d8" stroke-width="1.400"/><path d="M211 15.200l5 5" stroke="#b0b4ba" stroke-width="2.600" stroke-linecap="round"/><path d="M206.800 8v3.200" stroke="#6a8ab8" stroke-width=".8"/>
<path d="M224.500 8.500l6.500-6v3.600c6 0 10 3.400 9.500 9.400-.4 2.400-1.600 3.600-2.600 4.200 1.600-4.600-1-8.400-6.900-8.200v3.600z" fill="url(#gy)" stroke="#8a8a8a" stroke-width=".5"/>
<path d="M263.500 8.500l-6.500-6v3.600c-6 0-10 3.400-9.500 9.400.4 2.400 1.600 3.600 2.600 4.200-1.600-4.600 1-8.400 6.900-8.200v3.600z" fill="url(#gy)" stroke="#8a8a8a" stroke-width=".5"/>
<path d="M272.500 9l6.500-6v3.600c6 0 9.500 3.400 9 9.400-.4 2.400-1.600 3.600-2.600 4.200 1.600-4.600-.6-8.400-6.400-8.200v3.600z" fill="#5f8fd8" stroke="#3a68b0" stroke-width=".5"/>
<path d="M271 11.500h7M271 20.500h7" stroke="#8a6a20" stroke-width="1.600"/><path d="M272 12.300h5c0 2.600-1.600 2.900-1.600 3.800s1.600 1.200 1.600 3.700h-5c0-2.500 1.600-2.800 1.600-3.700s-1.600-1.200-1.600-3.800z" fill="#e8d8a0" stroke="#8a6a20" stroke-width=".7"/>
<path d="M295 9.500h7" stroke="#000" stroke-width="1"/><path d="M295 12h7l-3.500 3.500z" fill="#000"/>
<g transform="translate(23.5,68)"><path d="M.8 2.500h9.500l3.700 2.600h-10z" fill="#eef2ff" stroke="#6c6cf8" stroke-width="1.100"/><path d="M.8 5.700h9.500l3.700 2.600h-10z" fill="#f4f4f4" stroke="#808080" stroke-width="1.100"/><path d="M.8 8.900h9.500l3.700 2.600h-10z" fill="#f4f4f4" stroke="#808080" stroke-width="1.100"/><ellipse cx="11.500" cy="17.300" rx="7" ry="1.500" fill="#50586a" opacity=".35"/><ellipse cx="10.600" cy="14.800" rx="7.300" ry="4.600" fill="#d8a888" stroke="#8a5040" stroke-width=".8"/><circle cx="8.700" cy="16.200" r="2.100" fill="#1040f0"/><circle cx="8.200" cy="15.600" r=".8" fill="#60a0ff"/><circle cx="13.300" cy="15.500" r="2" fill="#10c020"/><circle cx="12.900" cy="15" r=".7" fill="#80ff80"/><circle cx="14.100" cy="12.400" r="2.100" fill="#d81818"/><circle cx="13.700" cy="11.800" r=".8" fill="#ff8080"/><path d="M18.200 2.300l-5.700 6.500" stroke="#c06810" stroke-width="1.800" stroke-linecap="round"/><path d="M12.500 8.800l-3 3.800" stroke="#d0d0d0" stroke-width="1.700"/><path d="M9.500 12.600l-1 1.300" stroke="#303030" stroke-width="1.500"/></g>
<g transform="translate(48,68)"><path d="M8.500 1.800h8l3 3v10.500h-11z" fill="url(#pgb)" stroke="#111" stroke-width="1.500"/><path d="M3.800 6h7l2.800 2.800v8h-9.800z" fill="url(#pgb)" stroke="#111" stroke-width="1.500"/><path d="M10.800 6v2.800h2.800" fill="#f4f4ec" stroke="#111" stroke-width=".8"/><path d="M16.500 1.800v3h3" fill="#f4f4ec" stroke="#111" stroke-width=".8"/><g transform="translate(0,11.700000000000001) scale(1,.88)"><path d="M0.3 8.4C3 4 7 1.4 11 1.3C15 1.4 18.5 3.6 20 5.6C17.500 7.800 13.500 9 9.500 9C5.500 9.200 2 9 0.3 8.400Z" fill="#c4c8ec"/><circle cx="9.600" cy="5.300" r="3.900" fill="#3c5c92"/><circle cx="9.500" cy="5.400" r="1.600" fill="#141c34"/><circle cx="9.300" cy="3.900" r="1" fill="#a8c8ff"/><path d="M0.6 8.200C3.300 3.500 7 1.100 11 1C15 1.100 18.400 3.200 20 5.600" fill="none" stroke="#222a3c" stroke-width="2.100"/><path d="M10 .5l.3-1M12.500 .7l.8-1.100M15 1.600l1.100-1M17 2.800l1.400-.7M18.600 4.300l1.400-.3" stroke="#222a3c" stroke-width=".9" fill="none"/><path d="M0.4 8.600C4 9.600 14 9.600 19.500 6.200" fill="none" stroke="#7a6078" stroke-width=".7"/></g></g>
<g transform="translate(73.5,68)"><g transform="translate(0,1.4) scale(1,.88)"><path d="M0.3 8.4C3 4 7 1.4 11 1.3C15 1.4 18.5 3.6 20 5.6C17.500 7.800 13.500 9 9.500 9C5.500 9.200 2 9 0.3 8.400Z" fill="#c4c8ec"/><circle cx="9.600" cy="5.300" r="3.900" fill="#3c5c92"/><circle cx="9.500" cy="5.400" r="1.600" fill="#141c34"/><circle cx="9.300" cy="3.900" r="1" fill="#a8c8ff"/><path d="M0.6 8.200C3.300 3.500 7 1.100 11 1C15 1.100 18.400 3.200 20 5.600" fill="none" stroke="#222a3c" stroke-width="2.100"/><path d="M10 .5l.3-1M12.500 .7l.8-1.100M15 1.600l1.100-1M17 2.800l1.400-.7M18.600 4.300l1.400-.3" stroke="#222a3c" stroke-width=".9" fill="none"/><path d="M0.4 8.600C4 9.600 14 9.600 19.500 6.200" fill="none" stroke="#7a6078" stroke-width=".7"/></g><path d="M1.1 15.1h8.0M5.1 11.1v8.0" stroke="#4a5a48" stroke-width="2.4" fill="none" opacity=".6"/><path d="M0.5 14.5h8.0M4.5 10.5v8.0" stroke="#70ee38" stroke-width="2.4" fill="none"/><path d="M10.5 13l5.5 6M14.0 11.5c4-2.5 7.5 1 5 5" stroke="#3a7be0" stroke-width="1.7" fill="none"/></g>
<g transform="translate(99.5,68)"><g transform="translate(0,1.4) scale(1,.88)"><path d="M0.3 8.4C3 4 7 1.4 11 1.3C15 1.4 18.5 3.6 20 5.6C17.500 7.800 13.500 9 9.500 9C5.500 9.200 2 9 0.3 8.400Z" fill="#c4c8ec"/><circle cx="9.600" cy="5.300" r="3.900" fill="#3c5c92"/><circle cx="9.500" cy="5.400" r="1.600" fill="#141c34"/><circle cx="9.300" cy="3.900" r="1" fill="#a8c8ff"/><path d="M0.6 8.200C3.300 3.500 7 1.100 11 1C15 1.100 18.400 3.200 20 5.600" fill="none" stroke="#222a3c" stroke-width="2.100"/><path d="M10 .5l.3-1M12.500 .7l.8-1.100M15 1.600l1.100-1M17 2.800l1.400-.7M18.600 4.300l1.400-.3" stroke="#222a3c" stroke-width=".9" fill="none"/><path d="M0.4 8.600C4 9.600 14 9.600 19.500 6.200" fill="none" stroke="#7a6078" stroke-width=".7"/></g><path d="M0.7000000000000002 16.3h7.6" stroke="#8a8a3a" stroke-width="2" opacity=".45"/><path d="M0.7000000000000002 15.5h7.6" stroke="#e6e600" stroke-width="2" fill="none"/><path d="M10.5 13l5.5 6M14.0 11.5c4-2.5 7.5 1 5 5" stroke="#3a7be0" stroke-width="1.7" fill="none"/></g>
<g transform="translate(126,68)"><g transform="translate(0,1.4) scale(1,.88)"><path d="M0.3 8.4C3 4 7 1.4 11 1.3C15 1.4 18.5 3.6 20 5.6C17.500 7.800 13.500 9 9.500 9C5.500 9.200 2 9 0.3 8.400Z" fill="#c4c8ec"/><circle cx="9.600" cy="5.300" r="3.900" fill="#3c5c92"/><circle cx="9.500" cy="5.400" r="1.600" fill="#141c34"/><circle cx="9.300" cy="3.900" r="1" fill="#a8c8ff"/><path d="M0.6 8.200C3.300 3.500 7 1.100 11 1C15 1.100 18.400 3.200 20 5.600" fill="none" stroke="#222a3c" stroke-width="2.100"/><path d="M10 .5l.3-1M12.500 .7l.8-1.100M15 1.600l1.100-1M17 2.800l1.400-.7M18.600 4.300l1.400-.3" stroke="#222a3c" stroke-width=".9" fill="none"/><path d="M0.4 8.600C4 9.600 14 9.600 19.500 6.200" fill="none" stroke="#7a6078" stroke-width=".7"/></g><rect x="1.5" y="8" width="5" height="12" rx="1.5" fill="#111"/><circle cx="4.0" cy="11.2" r="1.900" fill="#f0c020"/><circle cx="4.0" cy="16.6" r="1.900" fill="#20d020"/><rect x="13.5" y="8" width="5" height="12" rx="1.5" fill="#111"/><circle cx="16.0" cy="11.2" r="1.900" fill="#e02020"/><circle cx="16.0" cy="16.6" r="1.900" fill="#f0c020"/></g>
<g transform="translate(152,68)"><g transform="translate(0,1.4) scale(1,.88)"><path d="M0.3 8.4C3 4 7 1.4 11 1.3C15 1.4 18.5 3.6 20 5.6C17.500 7.800 13.500 9 9.500 9C5.500 9.200 2 9 0.3 8.400Z" fill="#c4c8ec"/><circle cx="9.600" cy="5.300" r="3.900" fill="#3c5c92"/><circle cx="9.500" cy="5.400" r="1.600" fill="#141c34"/><circle cx="9.300" cy="3.900" r="1" fill="#a8c8ff"/><path d="M0.6 8.200C3.300 3.500 7 1.100 11 1C15 1.100 18.400 3.200 20 5.600" fill="none" stroke="#222a3c" stroke-width="2.100"/><path d="M10 .5l.3-1M12.500 .7l.8-1.100M15 1.600l1.100-1M17 2.800l1.400-.7M18.600 4.300l1.400-.3" stroke="#222a3c" stroke-width=".9" fill="none"/><path d="M0.4 8.600C4 9.600 14 9.600 19.500 6.200" fill="none" stroke="#7a6078" stroke-width=".7"/></g><g transform="translate(10.5,13.5)"><path d="M-7.5 -1C-7.5 -6 -3 -7.5 2 -6.5L2 -9.0L7.5 -4.500L2 -0.500L2 -3.500C-2 -4 -4 -2.500 -4.500 0Z" fill="#58c830" stroke="#2a8a18" stroke-width=".5"/><path d="M7.5 1C7.5 6 3 7.5 -2 6.5L-2 9.0L-7.5 4.500L-2 0.500L-2 3.500C2 4 4 2.500 4.500 0Z" fill="#e8dc20" stroke="#a09010" stroke-width=".5"/></g></g>
<g transform="translate(178,68)"><g transform="translate(0,1.4) scale(1,.88)"><path d="M0.3 8.4C3 4 7 1.4 11 1.3C15 1.4 18.5 3.6 20 5.6C17.500 7.800 13.500 9 9.500 9C5.500 9.200 2 9 0.3 8.400Z" fill="#c4c8ec"/><circle cx="9.600" cy="5.300" r="3.900" fill="#3c5c92"/><circle cx="9.500" cy="5.400" r="1.600" fill="#141c34"/><circle cx="9.300" cy="3.900" r="1" fill="#a8c8ff"/><path d="M0.6 8.200C3.300 3.500 7 1.100 11 1C15 1.100 18.400 3.200 20 5.600" fill="none" stroke="#222a3c" stroke-width="2.100"/><path d="M10 .5l.3-1M12.500 .7l.8-1.100M15 1.600l1.100-1M17 2.800l1.400-.7M18.600 4.300l1.400-.3" stroke="#222a3c" stroke-width=".9" fill="none"/><path d="M0.4 8.600C4 9.600 14 9.600 19.500 6.200" fill="none" stroke="#7a6078" stroke-width=".7"/></g><path d="M1.1 13.1h6M4.1 10.1v6" stroke="#4a5a48" stroke-width="1.8" fill="none" opacity=".6"/><path d="M0.5 12.5h6M3.5 9.5v6" stroke="#70ee38" stroke-width="1.8" fill="none"/><path d="M6 19.500l6.500-9.500" stroke="#222" stroke-width="1.200"/><path d="M11 18.3h8" stroke="#8a8a3a" stroke-width="2" opacity=".45"/><path d="M11 17.5h8" stroke="#e6e600" stroke-width="2" fill="none"/></g>
<g transform="translate(204,68)"><g transform="translate(0,1.4) scale(1,.88)"><path d="M0.3 8.4C3 4 7 1.4 11 1.3C15 1.4 18.5 3.6 20 5.6C17.500 7.800 13.500 9 9.500 9C5.500 9.200 2 9 0.3 8.400Z" fill="#c4c8ec"/><circle cx="9.600" cy="5.300" r="3.900" fill="#3c5c92"/><circle cx="9.500" cy="5.400" r="1.600" fill="#141c34"/><circle cx="9.300" cy="3.900" r="1" fill="#a8c8ff"/><path d="M0.6 8.200C3.300 3.500 7 1.100 11 1C15 1.100 18.400 3.200 20 5.600" fill="none" stroke="#222a3c" stroke-width="2.100"/><path d="M10 .5l.3-1M12.500 .7l.8-1.100M15 1.600l1.100-1M17 2.800l1.400-.7M18.600 4.300l1.400-.3" stroke="#222a3c" stroke-width=".9" fill="none"/><path d="M0.4 8.600C4 9.600 14 9.600 19.500 6.200" fill="none" stroke="#7a6078" stroke-width=".7"/></g><path d="M9.9 16.1h8.4M14.1 11.9v8.4" stroke="#4a5a48" stroke-width="2.2" fill="none" opacity=".6"/><path d="M9.3 15.5h8.4M13.5 11.3v8.4" stroke="#70ee38" stroke-width="2.2" fill="none"/></g>
<g transform="translate(230,68)"><g transform="translate(0,1.4) scale(1,.88)"><path d="M0.3 8.4C3 4 7 1.4 11 1.3C15 1.4 18.5 3.6 20 5.6C17.500 7.800 13.500 9 9.500 9C5.500 9.200 2 9 0.3 8.400Z" fill="#c4c8ec"/><circle cx="9.600" cy="5.300" r="3.900" fill="#3c5c92"/><circle cx="9.500" cy="5.400" r="1.600" fill="#141c34"/><circle cx="9.300" cy="3.900" r="1" fill="#a8c8ff"/><path d="M0.6 8.200C3.300 3.500 7 1.100 11 1C15 1.100 18.400 3.200 20 5.600" fill="none" stroke="#222a3c" stroke-width="2.100"/><path d="M10 .5l.3-1M12.500 .7l.8-1.100M15 1.600l1.100-1M17 2.800l1.400-.7M18.600 4.300l1.400-.3" stroke="#222a3c" stroke-width=".9" fill="none"/><path d="M0.4 8.600C4 9.600 14 9.600 19.500 6.200" fill="none" stroke="#7a6078" stroke-width=".7"/></g><path d="M8.5 15.3h10" stroke="#8a8a3a" stroke-width="2.2" opacity=".45"/><path d="M8.5 14.5h10" stroke="#e6e600" stroke-width="2.2" fill="none"/></g>
<g transform="translate(283,79)"><path d="M-8.3 -1C-8.3 -6 -3 -8.3 2 -7.300000000000001L2 -9.8L8.3 -4.500L2 -0.500L2 -3.500C-2 -4 -4 -2.500 -4.500 0Z" fill="#86b0e8" stroke="#4a7cc8" stroke-width=".5"/><path d="M8.3 1C8.3 6 3 8.3 -2 7.300000000000001L-2 9.8L-8.3 4.500L-2 0.500L-2 3.500C2 4 4 2.500 4.500 0Z" fill="#86b0e8" stroke="#4a7cc8" stroke-width=".5"/></g>
<path d="M304.7 72.39999999999999v11.5a5.65 2.6 0 0 0 11.3 0v-11.5" fill="none" stroke="#222" stroke-width="1"/><ellipse cx="310.34999999999997" cy="72.39999999999999" rx="5.65" ry="2.6" fill="none" stroke="#222" stroke-width="1"/><path d="M304.7 83.9a5.65 2.6 0 0 1 11.3 0" fill="none" stroke="#222" stroke-width="0.8"/>
<path d="M331 72.39999999999999v11.5a5.5 2.6 0 0 0 11 0v-11.5" fill="none" stroke="#222" stroke-width="1"/><ellipse cx="336.5" cy="72.39999999999999" rx="5.5" ry="2.6" fill="none" stroke="#222" stroke-width="1"/>
<path d="M356.8 72.39999999999999v11.5a5.6 2.6 0 0 0 11.2 0v-11.5" fill="none" stroke="#222" stroke-width="1"/><ellipse cx="362.40000000000003" cy="72.39999999999999" rx="5.6" ry="2.6" fill="none" stroke="#222" stroke-width="1"/><path d="M356.800 83.900a5.600 2.600 0 0 1 11.200 0" fill="none" stroke="#555" stroke-width=".7" stroke-dasharray="1.500 1"/>
<ellipse cx="393" cy="86.5" rx="6" ry="1.6" fill="#50586a" opacity=".45"/><path d="M382.7 72.39999999999999v11.5a5.6 2.6 0 0 0 11.2 0v-11.5" fill="url(#cb)" stroke="#20e0f0" stroke-width="1.1"/><ellipse cx="388.3" cy="72.39999999999999" rx="5.6" ry="2.6" fill="#5a8ad8" stroke="#20e0f0" stroke-width="1.1"/>
<rect x="401.500" y="66.500" width="23" height="23" fill="#ffe680" stroke="#e8c860" stroke-width="1"/>
<ellipse cx="418" cy="86.5" rx="6" ry="1.6" fill="#50586a" opacity=".45"/><path d="M408.8 72.39999999999999v11.5a5.6 2.6 0 0 0 11.2 0v-11.5" fill="url(#cb)" stroke="#101828" stroke-width="1.1"/><ellipse cx="414.40000000000003" cy="72.39999999999999" rx="5.6" ry="2.6" fill="#3a62b8" stroke="#101828" stroke-width="1.1"/>
<ellipse cx="445" cy="86.5" rx="6" ry="1.6" fill="#50586a" opacity=".45"/><path d="M434.7 72.39999999999999v11.5a5.6 2.6 0 0 0 11.2 0v-11.5" fill="url(#cw)" stroke="#30e0f0" stroke-width="1.1"/><ellipse cx="440.3" cy="72.39999999999999" rx="5.6" ry="2.6" fill="#e8eefc" stroke="#30e0f0" stroke-width="1.1"/>
<ellipse cx="471" cy="86.5" rx="6" ry="1.6" fill="#50586a" opacity=".45"/><path d="M461 72.39999999999999v11.5a5.6 2.6 0 0 0 11.2 0v-11.5" fill="url(#cw)" stroke="#303848" stroke-width="1.1"/><ellipse cx="466.6" cy="72.39999999999999" rx="5.6" ry="2.6" fill="#e0e6f6" stroke="#303848" stroke-width="1.1"/>
<path d="M486.8 72.39999999999999v11.5a5.6 2.6 0 0 0 11.2 0v-11.5" fill="none" stroke="#222" stroke-width="1"/><ellipse cx="492.40000000000003" cy="72.39999999999999" rx="5.6" ry="2.6" fill="none" stroke="#222" stroke-width="1"/><path d="M489 72.500l2 13M492.500 72.500l-1.500 13.500M492.500 72.500l3 13M496 72l-.5 13.500M489 72.500l5 13" stroke="#222" stroke-width=".6" fill="none"/>
<path d="M507.5 71.1v7.8a4.75 2.6 0 0 0 9.5 0v-7.8" fill="#f0f2f8" stroke="#555" stroke-width="0.9"/><ellipse cx="512.25" cy="71.1" rx="4.75" ry="2.6" fill="#f0f2f8" stroke="#555" stroke-width="0.9"/><path d="M515.5 76.6v8.3a5.25 2.6 0 0 0 10.5 0v-8.3" fill="url(#cb)" stroke="#1a2c58" stroke-width="0.9"/><ellipse cx="520.75" cy="76.6" rx="5.25" ry="2.6" fill="#4a72c8" stroke="#1a2c58" stroke-width="0.9"/>
<path d="M517.500 70.500c2-2.500 5-2.500 6.500-.5l1.200-1.200.3 4.200-4.200-.3 1.200-1.200c-1.200-1.200-2.800-1.200-3.800.200z" fill="#30c020" stroke="#189010" stroke-width=".4"/><path d="M514.500 85c-2 2.500-5 2-6-.5l-1.500.8.500-4 3.800 1-1.300.9c.8 1.300 2.200 1.500 3.300.600z" fill="#30c020" stroke="#189010" stroke-width=".4"/>
<path d="M535.5 72.1v10.3a5.25 2.6 0 0 0 10.5 0v-10.3" fill="url(#cb)" stroke="#1a2c58" stroke-width="0.9"/><ellipse cx="540.75" cy="72.1" rx="5.25" ry="2.6" fill="#4a72c8" stroke="#1a2c58" stroke-width="0.9"/><g transform="translate(547.5,82)"><path d="M-6.2 -1C-6.2 -6 -3 -6.2 2 -5.2L2 -7.7L6.2 -4.500L2 -0.500L2 -3.500C-2 -4 -4 -2.500 -4.500 0Z" fill="#86b0e8" stroke="#4a7cc8" stroke-width=".5"/><path d="M6.2 1C6.2 6 3 6.2 -2 5.2L-2 7.7L-6.2 4.500L-2 0.500L-2 3.500C2 4 4 2.500 4.500 0Z" fill="#86b0e8" stroke="#4a7cc8" stroke-width=".5"/></g>
<g transform="translate(560.5,68)"><rect x="1.500" y="2.500" width="14.500" height="11" fill="#34446c" stroke="#8a92a8" stroke-width="1"/><path d="M3 16.500h11" stroke="#8a92a8" stroke-width="1.500"/><path d="M5 4.500l11 12.500" stroke="#c8ccd4" stroke-width="2.600" stroke-linecap="round"/><path d="M4 5a3 3 0 1 1 3.500 2.500" fill="none" stroke="#dfe2e8" stroke-width="1.600"/><path d="M16.500 3.500l-10 11.500" stroke="#e8eaf0" stroke-width="1.500"/><path d="M6.500 15l-3 4" stroke="#3a78d8" stroke-width="2.800" stroke-linecap="round"/></g>
<g transform="translate(603,68)"><path d="M0 3.9400000000000004l5.25 -2.9400000000000004l5.25 2.9400000000000004l-5.25 2.9400000000000004z" fill="#d8d8d8" stroke="#333" stroke-width=".5"/><path d="M0 3.9400000000000004l5.25 2.9400000000000004v6.51l-5.25 -2.9400000000000004z" fill="#9a9a9a" stroke="#333" stroke-width=".5"/><path d="M10.5 3.9400000000000004l-5.25 2.9400000000000004v6.51l5.25 -2.9400000000000004z" fill="#6a6a6a" stroke="#333" stroke-width=".5"/><path d="M8.5 3.9400000000000004l5.25 -2.9400000000000004l5.25 2.9400000000000004l-5.25 2.9400000000000004z" fill="#ffffff" stroke="#444" stroke-width=".5"/><path d="M8.5 3.9400000000000004l5.25 2.9400000000000004v6.51l-5.25 -2.9400000000000004z" fill="#f0f0f0" stroke="#444" stroke-width=".5"/><path d="M19.0 3.9400000000000004l-5.25 2.9400000000000004v6.51l5.25 -2.9400000000000004z" fill="#d8d8d8" stroke="#444" stroke-width=".5"/><path d="M1.2000000000000002 15.1h6.8M4.6 11.7v6.8" stroke="#4a5a48" stroke-width="2.4" fill="none" opacity=".6"/><path d="M0.6000000000000001 14.5h6.8M4 11.1v6.8" stroke="#70ee38" stroke-width="2.4" fill="none"/><path d="M10.5 13.5l5.5 6M14.0 12.0c4-2.5 7.5 1 5 5" stroke="#3a7be0" stroke-width="1.7" fill="none"/></g>
<g transform="translate(629,68)"><path d="M0 3.9400000000000004l5.25 -2.9400000000000004l5.25 2.9400000000000004l-5.25 2.9400000000000004z" fill="#d8d8d8" stroke="#333" stroke-width=".5"/><path d="M0 3.9400000000000004l5.25 2.9400000000000004v6.51l-5.25 -2.9400000000000004z" fill="#9a9a9a" stroke="#333" stroke-width=".5"/><path d="M10.5 3.9400000000000004l-5.25 2.9400000000000004v6.51l5.25 -2.9400000000000004z" fill="#6a6a6a" stroke="#333" stroke-width=".5"/><path d="M8.5 3.9400000000000004l5.25 -2.9400000000000004l5.25 2.9400000000000004l-5.25 2.9400000000000004z" fill="#ffffff" stroke="#444" stroke-width=".5"/><path d="M8.5 3.9400000000000004l5.25 2.9400000000000004v6.51l-5.25 -2.9400000000000004z" fill="#f0f0f0" stroke="#444" stroke-width=".5"/><path d="M19.0 3.9400000000000004l-5.25 2.9400000000000004v6.51l5.25 -2.9400000000000004z" fill="#d8d8d8" stroke="#444" stroke-width=".5"/><rect x="1" y="8.5" width="5" height="12" rx="1.5" fill="#111"/><circle cx="3.5" cy="11.7" r="1.900" fill="#f0c020"/><circle cx="3.5" cy="17.1" r="1.900" fill="#20d020"/><rect x="13" y="8.5" width="5" height="12" rx="1.5" fill="#111"/><circle cx="15.5" cy="11.7" r="1.900" fill="#e02020"/><circle cx="15.5" cy="17.1" r="1.900" fill="#f0c020"/></g>
<g transform="translate(655,68)"><path d="M0 3.9400000000000004l5.25 -2.9400000000000004l5.25 2.9400000000000004l-5.25 2.9400000000000004z" fill="#d8d8d8" stroke="#333" stroke-width=".5"/><path d="M0 3.9400000000000004l5.25 2.9400000000000004v6.51l-5.25 -2.9400000000000004z" fill="#9a9a9a" stroke="#333" stroke-width=".5"/><path d="M10.5 3.9400000000000004l-5.25 2.9400000000000004v6.51l5.25 -2.9400000000000004z" fill="#6a6a6a" stroke="#333" stroke-width=".5"/><path d="M8.5 3.9400000000000004l5.25 -2.9400000000000004l5.25 2.9400000000000004l-5.25 2.9400000000000004z" fill="#ffffff" stroke="#444" stroke-width=".5"/><path d="M8.5 3.9400000000000004l5.25 2.9400000000000004v6.51l-5.25 -2.9400000000000004z" fill="#f0f0f0" stroke="#444" stroke-width=".5"/><path d="M19.0 3.9400000000000004l-5.25 2.9400000000000004v6.51l5.25 -2.9400000000000004z" fill="#d8d8d8" stroke="#444" stroke-width=".5"/><g transform="translate(10,13.5)"><path d="M-7.2 -1C-7.2 -6 -3 -7.2 2 -6.2L2 -8.7L7.2 -4.500L2 -0.500L2 -3.500C-2 -4 -4 -2.500 -4.500 0Z" fill="#58c830" stroke="#2a8a18" stroke-width=".5"/><path d="M7.2 1C7.2 6 3 7.2 -2 6.2L-2 8.7L-7.2 4.500L-2 0.500L-2 3.500C2 4 4 2.500 4.500 0Z" fill="#e8dc20" stroke="#a09010" stroke-width=".5"/></g></g>
<g transform="translate(680.5,68)"><path d="M0 3.9400000000000004l5.25 -2.9400000000000004l5.25 2.9400000000000004l-5.25 2.9400000000000004z" fill="#d8d8d8" stroke="#333" stroke-width=".5"/><path d="M0 3.9400000000000004l5.25 2.9400000000000004v6.51l-5.25 -2.9400000000000004z" fill="#9a9a9a" stroke="#333" stroke-width=".5"/><path d="M10.5 3.9400000000000004l-5.25 2.9400000000000004v6.51l5.25 -2.9400000000000004z" fill="#6a6a6a" stroke="#333" stroke-width=".5"/><path d="M8.5 3.9400000000000004l5.25 -2.9400000000000004l5.25 2.9400000000000004l-5.25 2.9400000000000004z" fill="#ffffff" stroke="#444" stroke-width=".5"/><path d="M8.5 3.9400000000000004l5.25 2.9400000000000004v6.51l-5.25 -2.9400000000000004z" fill="#f0f0f0" stroke="#444" stroke-width=".5"/><path d="M19.0 3.9400000000000004l-5.25 2.9400000000000004v6.51l5.25 -2.9400000000000004z" fill="#d8d8d8" stroke="#444" stroke-width=".5"/><path d="M1.1 13.1h6M4.1 10.1v6" stroke="#4a5a48" stroke-width="1.8" fill="none" opacity=".6"/><path d="M0.5 12.5h6M3.5 9.5v6" stroke="#70ee38" stroke-width="1.8" fill="none"/><path d="M6 19.500l6.500-9.500" stroke="#222" stroke-width="1.200"/><path d="M11 18.3h8" stroke="#8a8a3a" stroke-width="2" opacity=".45"/><path d="M11 17.5h8" stroke="#e6e600" stroke-width="2" fill="none"/></g>
<ellipse cx="722" cy="86.5" rx="6" ry="1.6" fill="#50586a" opacity=".45"/><path d="M711.6 72.39999999999999v11.5a5.6 2.6 0 0 0 11.2 0v-11.5" fill="url(#cb)" stroke="#1a2c58" stroke-width="0.9"/><ellipse cx="717.2" cy="72.39999999999999" rx="5.6" ry="2.6" fill="#5a82d0" stroke="#1a2c58" stroke-width="0.9"/><path d="M717.200 73v13" stroke="#000" stroke-width="1" stroke-dasharray="2.500 1.500"/>
<ellipse cx="748" cy="86.5" rx="6" ry="1.6" fill="#50586a" opacity=".45"/><path d="M738 72.39999999999999v11.5a5.6 2.6 0 0 0 11.2 0v-11.5" fill="url(#cb)" stroke="#1a2c58" stroke-width="0.9"/><ellipse cx="743.6" cy="72.39999999999999" rx="5.6" ry="2.6" fill="#5a82d0" stroke="#1a2c58" stroke-width="0.9"/><path d="M741 74v12.500M746.500 74v12.500" stroke="#f0e860" stroke-width="1.200"/><path d="M743.700 74.500v12.500" stroke="#f4f4ff" stroke-width="1.400"/>
<ellipse cx="774" cy="86.5" rx="6" ry="1.6" fill="#50586a" opacity=".45"/><path d="M764 72.39999999999999v11.5a5.6 2.6 0 0 0 11.2 0v-11.5" fill="url(#cw)" stroke="#30e0f0" stroke-width="1.1"/><ellipse cx="769.6" cy="72.39999999999999" rx="5.6" ry="2.6" fill="#dfe6f6" stroke="#30e0f0" stroke-width="1.1"/><path d="M766.500 79l3 4.500 6-9" stroke="#30b828" stroke-width="2.600" fill="none"/>
<ellipse cx="794" cy="86.5" rx="6" ry="1.6" fill="#50586a" opacity=".45"/><ellipse cx="788" cy="81.500" rx="4" ry="1.800" fill="#50586a" opacity=".5"/><path d="M790 73.39999999999999v10.5a5.6 2.6 0 0 0 11.2 0v-10.5" fill="url(#cw)" stroke="#30e0f0" stroke-width="1.1"/><ellipse cx="795.6" cy="73.39999999999999" rx="5.6" ry="2.6" fill="#dfe6f6" stroke="#30e0f0" stroke-width="1.1"/><rect x="797.500" y="68.800" width="5" height="5" fill="none" stroke="#e0a020" stroke-width="1.300"/><circle cx="800" cy="72.500" r="1.500" fill="none" stroke="#e04818" stroke-width=".9"/>
<path d="M816 72.39999999999999v11.5a5.5 2.6 0 0 0 11 0v-11.5" fill="#e8eefc" stroke="#4a90e0" stroke-width="1"/><ellipse cx="821.5" cy="72.39999999999999" rx="5.5" ry="2.6" fill="#e8eefc" stroke="#4a90e0" stroke-width="1"/><path d="M818 72.500l2.500 13M821.500 72.500l-1.500 13.500M821.500 72.500l3.500 13M825 72l-.5 13.500M818 72.500l5 13M817 78l9 2M817 82l9-2" stroke="#4a90e0" stroke-width=".6" fill="none"/>
<g transform="translate(837.5,68)"><path d="M.5 6.500l9-4.500 9 4.500-9 3.500z" fill="#5a8ae0" stroke="#0c1838" stroke-width=".9"/><path d="M.5 6.500l9 3.500v8.500l-6-4.500z" fill="#2c58b8" stroke="#0c1838" stroke-width=".9"/><path d="M18.500 6.500l-9 3.500v8.500l6-4.500z" fill="#0c2058" stroke="#0c1838" stroke-width=".9"/></g>
<g transform="translate(879,68)"><path d="M9 11.940000000000001l5.25 -2.9400000000000004l5.25 2.9400000000000004l-5.25 2.9400000000000004z" fill="#a8a8a8" stroke="#333" stroke-width=".5"/><path d="M9 11.940000000000001l5.25 2.9400000000000004v6.51l-5.25 -2.9400000000000004z" fill="#707070" stroke="#333" stroke-width=".5"/><path d="M19.5 11.940000000000001l-5.25 2.9400000000000004v6.51l5.25 -2.9400000000000004z" fill="#484848" stroke="#333" stroke-width=".5"/><path d="M7.776 11.744l-4.600 4.600" stroke="#8c9098" stroke-width="3" stroke-linecap="round"/><path d="M7.776 11.744l-4.600 4.600" stroke="#e4e6ea" stroke-width="1.500" stroke-linecap="round"/><circle cx="11" cy="8" r="6.1000000000000005" fill="none" stroke="#f0f2f8" stroke-width="1"/><circle cx="11" cy="8" r="5.2" fill="url(#gl)" stroke="#6a94c8" stroke-width="1.400"/><path d="M9.5 5.4l4.600 2.600-4.600 2.600z" fill="#b4c4d8" stroke="#7890b4" stroke-width=".5"/><path d="M1 3h4M3 1v4M1 7h4" stroke="#000" stroke-width="1"/></g>
<g transform="translate(905,68)"><path d="M9 11.940000000000001l5.25 -2.9400000000000004l5.25 2.9400000000000004l-5.25 2.9400000000000004z" fill="#a8a8a8" stroke="#333" stroke-width=".5"/><path d="M9 11.940000000000001l5.25 2.9400000000000004v6.51l-5.25 -2.9400000000000004z" fill="#707070" stroke="#333" stroke-width=".5"/><path d="M19.5 11.940000000000001l-5.25 2.9400000000000004v6.51l5.25 -2.9400000000000004z" fill="#484848" stroke="#333" stroke-width=".5"/><path d="M7.276 12.244l-4.600 4.600" stroke="#8c9098" stroke-width="3" stroke-linecap="round"/><path d="M7.276 12.244l-4.600 4.600" stroke="#e4e6ea" stroke-width="1.500" stroke-linecap="round"/><circle cx="10.5" cy="8.5" r="6.1000000000000005" fill="none" stroke="#f0f2f8" stroke-width="1"/><circle cx="10.5" cy="8.5" r="5.2" fill="url(#gl)" stroke="#6a94c8" stroke-width="1.400"/><path d="M9.0 5.9l4.600 2.600-4.600 2.600z" fill="#b4c4d8" stroke="#7890b4" stroke-width=".5"/><path d="M1 1l4 4M5 1l-4 4" stroke="#38b828" stroke-width="1.300"/><path d="M15.5 1l4 4M19.5 1l-4 4" stroke="#38b828" stroke-width="1.300"/><path d="M1 1l4 4M5 1l-4 4" stroke="#38b828" stroke-width="1.300"/><path d="M15.5 1l4 4M19.5 1l-4 4" stroke="#38b828" stroke-width="1.300"/><path d="M1 16l4 4M5 16l-4 4" stroke="#38b828" stroke-width="1.300"/><path d="M15.5 16l4 4M19.5 16l-4 4" stroke="#38b828" stroke-width="1.300"/><path d="M1 16l4 4M5 16l-4 4" stroke="#38b828" stroke-width="1.300"/><path d="M15.5 16l4 4M19.5 16l-4 4" stroke="#38b828" stroke-width="1.300"/></g>
<g transform="translate(931.5,68)"><rect x="3.500" y="5.500" width="12.500" height="10" fill="#f0f4ff" stroke="#222" stroke-width="1"/><path d="M1 2l4 4M5 2l-4 4" stroke="#38b828" stroke-width="1.300"/><path d="M14.5 2l4 4M18.5 2l-4 4" stroke="#38b828" stroke-width="1.300"/><path d="M1 2l4 4M5 2l-4 4" stroke="#38b828" stroke-width="1.300"/><path d="M14.5 2l4 4M18.5 2l-4 4" stroke="#38b828" stroke-width="1.300"/><path d="M1 15.5l4 4M5 15.5l-4 4" stroke="#38b828" stroke-width="1.300"/><path d="M14.5 15.5l4 4M18.5 15.5l-4 4" stroke="#38b828" stroke-width="1.300"/><path d="M1 15.5l4 4M5 15.5l-4 4" stroke="#38b828" stroke-width="1.300"/><path d="M14.5 15.5l4 4M18.5 15.5l-4 4" stroke="#38b828" stroke-width="1.300"/><text x="9.800" y="14.200" text-anchor="middle" font-family="Liberation Sans,sans-serif" font-weight="bold" font-size="8" fill="#2a1a9a">1:1</text></g>
<g transform="translate(958.5,68)"><path d="M4.0 16.0L13.6 6.4" stroke="#38b828" stroke-width="2.4"/><path d="M17.5 2.5L16.2 8.9L11.1 3.8Z" fill="#38b828" stroke="#1a8010" stroke-width=".4"/><circle cx="3.500" cy="16.500" r="2.800" fill="#d8d4c0" stroke="#605840" stroke-width=".6"/></g>
<g transform="translate(993,79)"><path d="M-8.3 -1C-8.3 -6 -3 -8.3 2 -7.300000000000001L2 -9.8L8.3 -4.500L2 -0.500L2 -3.500C-2 -4 -4 -2.500 -4.500 0Z" fill="#40c028" stroke="#188010" stroke-width=".5"/><path d="M8.3 1C8.3 6 3 8.3 -2 7.300000000000001L-2 9.8L-8.3 4.500L-2 0.500L-2 3.500C2 4 4 2.500 4.500 0Z" fill="#40c028" stroke="#188010" stroke-width=".5"/></g>
<g transform="translate(1009,68)"><g transform="translate(0,1.4) scale(1,.88)"><path d="M0.3 8.4C3 4 7 1.4 11 1.3C15 1.4 18.5 3.6 20 5.6C17.500 7.800 13.500 9 9.500 9C5.500 9.200 2 9 0.3 8.400Z" fill="#c4c8ec"/><circle cx="9.600" cy="5.300" r="3.900" fill="#3c5c92"/><circle cx="9.500" cy="5.400" r="1.600" fill="#141c34"/><circle cx="9.300" cy="3.900" r="1" fill="#a8c8ff"/><path d="M0.6 8.200C3.300 3.500 7 1.100 11 1C15 1.100 18.400 3.200 20 5.600" fill="none" stroke="#222a3c" stroke-width="2.100"/><path d="M10 .5l.3-1M12.500 .7l.8-1.100M15 1.600l1.100-1M17 2.800l1.400-.7M18.600 4.300l1.400-.3" stroke="#222a3c" stroke-width=".9" fill="none"/><path d="M0.4 8.600C4 9.600 14 9.600 19.500 6.200" fill="none" stroke="#7a6078" stroke-width=".7"/></g><circle cx="10" cy="15" r="5.800" fill="#f8d850" stroke="#d0a020" stroke-width=".6"/><circle cx="8" cy="13.500" r=".8" fill="#503000"/><circle cx="12" cy="13.500" r=".8" fill="#503000"/><path d="M7 16.500c1.500 2 4.500 2 6 0" stroke="#704000" stroke-width=".8" fill="none"/></g>
<g transform="translate(1062,81) scale(1)"><path d="M-9 2l9-6 10 4-9 7z" fill="#d8e4f8" stroke="#a8b8d8" stroke-width=".6"/><path d="M-4.500 2.500v-10" stroke="#1878f0" stroke-width="1.600"/><path d="M-4.500 -11l-2.400 4h4.800z" fill="#1878f0"/><path d="M-4.500 2.500l7-5" stroke="#30b030" stroke-width="1.500"/><path d="M4.500 -4l-4.200 .8 2.200 3z" fill="#30b030"/><path d="M-4.500 2.500l7 4.500" stroke="#e02020" stroke-width="1.500"/><path d="M4.500 8.300l-2-4-2.200 3.200z" fill="#e02020"/><circle cx="-4.500" cy="2.500" r="1.700" fill="#e8e8e8" stroke="#666" stroke-width=".5"/></g>
<g transform="translate(1079,68)"><g transform="translate(12.5,6.5) scale(0.62)"><path d="M-9 2l9-6 10 4-9 7z" fill="#d8e4f8" stroke="#a8b8d8" stroke-width=".6"/><path d="M-4.500 2.500v-10" stroke="#1878f0" stroke-width="1.600"/><path d="M-4.500 -11l-2.400 4h4.800z" fill="#1878f0"/><path d="M-4.500 2.500l7-5" stroke="#30b030" stroke-width="1.500"/><path d="M4.500 -4l-4.200 .8 2.200 3z" fill="#30b030"/><path d="M-4.500 2.500l7 4.500" stroke="#e02020" stroke-width="1.500"/><path d="M4.500 8.300l-2-4-2.200 3.200z" fill="#e02020"/><circle cx="-4.500" cy="2.500" r="1.700" fill="#e8e8e8" stroke="#666" stroke-width=".5"/></g><rect x="9.500" y="14" width="8.500" height="5" fill="#d8dce8" stroke="#888" stroke-width="1.200"/><path d="M2.5 19.5L6.7 13.9" stroke="#38b828" stroke-width="2.6"/><path d="M10.0 9.5L9.6 16.1L3.8 11.7Z" fill="#38b828" stroke="#1a8010" stroke-width=".4"/><circle cx="3" cy="19.500" r="1.600" fill="#888"/></g>
<g transform="translate(1104.5,68)"><g transform="translate(13.5,7.5) scale(0.66)"><path d="M-9 2l9-6 10 4-9 7z" fill="#d8e4f8" stroke="#a8b8d8" stroke-width=".6"/><path d="M-4.500 2.500v-10" stroke="#1878f0" stroke-width="1.600"/><path d="M-4.500 -11l-2.400 4h4.800z" fill="#1878f0"/><path d="M-4.500 2.500l7-5" stroke="#30b030" stroke-width="1.500"/><path d="M4.500 -4l-4.200 .8 2.200 3z" fill="#30b030"/><path d="M-4.500 2.500l7 4.500" stroke="#e02020" stroke-width="1.500"/><path d="M4.500 8.300l-2-4-2.200 3.200z" fill="#e02020"/><circle cx="-4.500" cy="2.500" r="1.700" fill="#e8e8e8" stroke="#666" stroke-width=".5"/></g><path d="M2.0 8.5L5.2 12.6" stroke="#38b828" stroke-width="2.4"/><path d="M8.5 17.0L2.3 14.8L8.0 10.4Z" fill="#38b828" stroke="#1a8010" stroke-width=".4"/><path d="M7.0 19.5L3.8 15.4" stroke="#38b828" stroke-width="2.4"/><path d="M0.5 11.0L6.7 13.2L1.0 17.6Z" fill="#38b828" stroke="#1a8010" stroke-width=".4"/></g>
<rect x="1147.0" y="69.0" width="6" height="5.600" fill="#00dcf8"/><rect x="1153.7" y="69.0" width="6" height="5.600" fill="#f8d800"/><rect x="1160.4" y="69.0" width="6" height="5.600" fill="#00e800"/><rect x="1147.0" y="75.2" width="6" height="5.600" fill="#ff8800"/><rect x="1153.7" y="75.2" width="6" height="5.600" fill="#a85c00"/><rect x="1160.4" y="75.2" width="6" height="5.600" fill="#ff00f0"/><rect x="1147.0" y="81.4" width="6" height="5.600" fill="#0000f8"/><rect x="1153.7" y="81.4" width="6" height="5.600" fill="#00a838"/><rect x="1160.4" y="81.4" width="6" height="5.600" fill="#888888"/>
<rect x="1175.500" y="68.500" width="15" height="19" fill="#eef2fc" stroke="#7a86a8" stroke-width="1"/><rect x="1177" y="70" width="12" height="1.800" fill="#6aa0f0"/><path d="M1177.500 73.500h3M1186 73.500h3" stroke="#f8b030" stroke-width="1"/><path d="M1177.500 76h11.500" stroke="#a0e070" stroke-width="1.400"/><rect x="1178.5" y="78.0" width="2.500" height="2.400" fill="#00dcf8"/><rect x="1181.5" y="78.0" width="2.500" height="2.400" fill="#f8d800"/><rect x="1184.5" y="78.0" width="2.500" height="2.400" fill="#00e800"/><rect x="1178.5" y="80.9" width="2.500" height="2.400" fill="#ff8800"/><rect x="1181.5" y="80.9" width="2.500" height="2.400" fill="#a85c00"/><rect x="1184.5" y="80.9" width="2.500" height="2.400" fill="#ff00f0"/><rect x="1178.5" y="83.8" width="2.500" height="2.400" fill="#0000f8"/><rect x="1181.5" y="83.8" width="2.500" height="2.400" fill="#00a838"/><rect x="1184.5" y="83.8" width="2.500" height="2.400" fill="#888888"/>
<circle cx="1209.500" cy="78.500" r="9.300" fill="#6a9a3a" stroke="#4a7a28" stroke-width="1"/><path d="M1204 73l11 12" stroke="#e4e6ea" stroke-width="2.400" stroke-linecap="round"/><path d="M1203 74a3 3 0 1 1 3.500 2" fill="none" stroke="#e4e6ea" stroke-width="1.600"/><path d="M1215 72l-7 8" stroke="#e8eaee" stroke-width="1.600"/><path d="M1208 80l-4 4.500" stroke="#3a78d8" stroke-width="2.800" stroke-linecap="round"/><ellipse cx="1210" cy="84" rx="2.200" ry="2.800" fill="#d8d8c8" opacity=".8"/>
<rect x="1225.500" y="68.500" width="19" height="18.500" fill="#dfe8fa" stroke="#4a5878" stroke-width="1"/><rect x="1226" y="69" width="18" height="3.200" fill="#3a78c8"/><path d="M1231 74.500h2M1234 74.500h2M1237 74.500h2M1240 74.500h2" stroke="#a8c020" stroke-width="1.800"/><path d="M1228 75h1.500M1228 78h1.500M1228 81h1.500M1228 84h1.500" stroke="#c06010" stroke-width="1.500"/><path d="M1233 77l8 8" stroke="#c8ccd4" stroke-width="1.800"/><path d="M1241.500 77l-5 5.500" stroke="#d8dce4" stroke-width="1.300"/><path d="M1236.500 82.500l-2.500 3" stroke="#3a78d8" stroke-width="2.200" stroke-linecap="round"/>
<circle cx="1253.5" cy="70.5" r="1.1" fill="#1a3a6a"/><circle cx="1257.8" cy="70.5" r="0.55" fill="#1a3a6a"/><circle cx="1262.1" cy="70.5" r="1.1" fill="#1a3a6a"/><circle cx="1266.4" cy="70.5" r="0.55" fill="#1a3a6a"/><circle cx="1270.7" cy="70.5" r="1.1" fill="#1a3a6a"/><circle cx="1253.5" cy="74.5" r="0.55" fill="#1a3a6a"/><circle cx="1257.8" cy="74.5" r="0.55" fill="#1a3a6a"/><circle cx="1262.1" cy="74.5" r="0.55" fill="#1a3a6a"/><circle cx="1266.4" cy="74.5" r="0.55" fill="#1a3a6a"/><circle cx="1270.7" cy="74.5" r="0.55" fill="#1a3a6a"/><circle cx="1253.5" cy="78.5" r="1.1" fill="#1a3a6a"/><circle cx="1257.8" cy="78.5" r="0.55" fill="#1a3a6a"/><circle cx="1262.1" cy="78.5" r="1.1" fill="#1a3a6a"/><circle cx="1266.4" cy="78.5" r="0.55" fill="#1a3a6a"/><circle cx="1270.7" cy="78.5" r="1.1" fill="#1a3a6a"/><circle cx="1253.5" cy="82.5" r="0.55" fill="#1a3a6a"/><circle cx="1257.8" cy="82.5" r="0.55" fill="#1a3a6a"/><circle cx="1262.1" cy="82.5" r="0.55" fill="#1a3a6a"/><circle cx="1266.4" cy="82.5" r="0.55" fill="#1a3a6a"/><circle cx="1270.7" cy="82.5" r="0.55" fill="#1a3a6a"/><circle cx="1253.5" cy="86.5" r="1.1" fill="#1a3a6a"/><circle cx="1257.8" cy="86.5" r="0.55" fill="#1a3a6a"/><circle cx="1262.1" cy="86.5" r="1.1" fill="#1a3a6a"/><circle cx="1266.4" cy="86.5" r="0.55" fill="#1a3a6a"/><circle cx="1270.7" cy="86.5" r="1.1" fill="#1a3a6a"/><path d="M1256.500 79l7-6.500 7-.8 1 3-1 4-5 3.500-3.500-4z" fill="#e8b060" stroke="#a87028" stroke-width=".6"/><circle cx="1257.500" cy="82.500" r="3" fill="#f0e040"/><path d="M1255.500 82.500h4M1257.500 80.500v4" stroke="#2878f0" stroke-width="1.100"/>
<ellipse cx="1292" cy="84.500" rx="5" ry="1.500" fill="#50586a" opacity=".5"/><path d="M1278.500 86.500l6-14.500 11.500-2-5.500 14.500z" fill="#e05858" stroke="#2868e0" stroke-width="1.400"/><path d="M1281 81l11-2M1283 76.500l11-2M1285 86l5.500-14M1281.500 86.500l5.500-14.300" stroke="#f0d0d0" stroke-width=".7"/>
<g transform="translate(7,134.5)"><path d="M4 4c-1 2-1 5 0 8M6.500 3c-1 2-1 6 0 9" stroke="#a8b4c8" stroke-width="1.300" fill="none"/><path d="M9.028 11.532l-4.600 4.600" stroke="#8c9098" stroke-width="3" stroke-linecap="round"/><path d="M9.028 11.532l-4.600 4.600" stroke="#e4e6ea" stroke-width="1.500" stroke-linecap="round"/><circle cx="12.5" cy="7.5" r="6.5" fill="none" stroke="#f0f2f8" stroke-width="1"/><circle cx="12.5" cy="7.5" r="5.6" fill="url(#gl)" stroke="#6a94c8" stroke-width="1.400"/><path d="M11.0 4.9l4.600 2.600-4.600 2.600z" fill="#b4c4d8" stroke="#7890b4" stroke-width=".5"/></g>
<g transform="translate(33,134.5)"><path d="M2 3l13.500 15.500M10 1.500l8 9" stroke="#3a78e0" stroke-width="1.600" stroke-dasharray="6 2.500"/><ellipse cx="11" cy="17.500" rx="7" ry="1.500" fill="#50586a" opacity=".4"/><path d="M7.7 13.8L15.4 4.4" stroke="#d89838" stroke-width="3.400"/><path d="M8.6 14.5L16.3 5.1" stroke="#8a5a18" stroke-width="1"/><path d="M15.4 4.4L17.0 2.5" stroke="#e02828" stroke-width="3.400"/><path d="M5.5 16.5L9.0 14.9L6.4 12.7Z" fill="#f0e0c0" stroke="#604020" stroke-width=".4"/><path d="M14 0h6l-3 3.500z" fill="#000"/></g>
<g transform="translate(7,159.5)"><rect x="4.500" y="5.500" width="12" height="9.500" fill="url(#pg)" stroke="#666" stroke-width="1"/><path d="M1 1.5l4 4M5 1.5l-4 4" stroke="#38b828" stroke-width="1.300"/><path d="M16 1.5l4 4M20 1.5l-4 4" stroke="#38b828" stroke-width="1.300"/><path d="M1 1.5l4 4M5 1.5l-4 4" stroke="#38b828" stroke-width="1.300"/><path d="M16 1.5l4 4M20 1.5l-4 4" stroke="#38b828" stroke-width="1.300"/><path d="M1 15l4 4M5 15l-4 4" stroke="#38b828" stroke-width="1.300"/><path d="M16 15l4 4M20 15l-4 4" stroke="#38b828" stroke-width="1.300"/><path d="M1 15l4 4M5 15l-4 4" stroke="#38b828" stroke-width="1.300"/><path d="M16 15l4 4M20 15l-4 4" stroke="#38b828" stroke-width="1.300"/></g>
<g transform="translate(33,159.5)"><path d="M8 6.500c-2-3-6.500-2-6.500 2s5 5 9 5.500 8 1 7.500 4.500-6 3-8 0" stroke="#3a78e0" stroke-width="1.700" fill="none"/><path d="M7.2 13.8L14.9 4.4" stroke="#d89838" stroke-width="3.400"/><path d="M8.1 14.5L15.8 5.1" stroke="#8a5a18" stroke-width="1"/><path d="M14.9 4.4L16.5 2.5" stroke="#e02828" stroke-width="3.400"/><path d="M5.0 16.5L8.5 14.9L5.9 12.7Z" fill="#f0e0c0" stroke="#604020" stroke-width=".4"/><path d="M14 0h6l-3 3.500z" fill="#000"/></g>
<g transform="translate(7,185.5)"><path d="M9 12.440000000000001l5.25 -2.9400000000000004l5.25 2.9400000000000004l-5.25 2.9400000000000004z" fill="#a8a8a8" stroke="#333" stroke-width=".5"/><path d="M9 12.440000000000001l5.25 2.9400000000000004v6.51l-5.25 -2.9400000000000004z" fill="#707070" stroke="#333" stroke-width=".5"/><path d="M19.5 12.440000000000001l-5.25 2.9400000000000004v6.51l5.25 -2.9400000000000004z" fill="#484848" stroke="#333" stroke-width=".5"/><path d="M7.776 11.744l-4.600 4.600" stroke="#8c9098" stroke-width="3" stroke-linecap="round"/><path d="M7.776 11.744l-4.600 4.600" stroke="#e4e6ea" stroke-width="1.500" stroke-linecap="round"/><circle cx="11" cy="8" r="6.1000000000000005" fill="none" stroke="#f0f2f8" stroke-width="1"/><circle cx="11" cy="8" r="5.2" fill="url(#gl)" stroke="#6a94c8" stroke-width="1.400"/><path d="M9.5 5.4l4.600 2.600-4.600 2.600z" fill="#b4c4d8" stroke="#7890b4" stroke-width=".5"/><path d="M.5 3.500h4M2.500 1.500v4M.5 7.500h4" stroke="#000" stroke-width="1"/><path d="M14 0h6l-3 3.500z" fill="#000"/></g>
<g transform="translate(33,185.5)"><path d="M3 3h15v8.500h-3.500v3.500h2v3.500h-13.500z" fill="#e4e8f4" stroke="#f0f000" stroke-width="1.500"/><path d="M6 10l3.500 5 6.500-9.500" stroke="#38c028" stroke-width="2.800" fill="none"/><path d="M14 0h6l-3 3.500z" fill="#000"/></g>
<g transform="translate(7,211.5)"><g transform="translate(10.5,13) scale(1)"><path d="M-9 2l9-6 10 4-9 7z" fill="#d8e4f8" stroke="#a8b8d8" stroke-width=".6"/><path d="M-4.500 2.500v-10" stroke="#1878f0" stroke-width="1.600"/><path d="M-4.500 -11l-2.400 4h4.800z" fill="#1878f0"/><path d="M-4.500 2.500l7-5" stroke="#30b030" stroke-width="1.500"/><path d="M4.500 -4l-4.200 .8 2.200 3z" fill="#30b030"/><path d="M-4.500 2.500l7 4.500" stroke="#e02020" stroke-width="1.500"/><path d="M4.500 8.300l-2-4-2.200 3.200z" fill="#e02020"/><circle cx="-4.500" cy="2.500" r="1.700" fill="#e8e8e8" stroke="#666" stroke-width=".5"/></g><path d="M14 0h6l-3 3.500z" fill="#000"/></g>
<g transform="translate(33,211.5)"><path d="M2 13c0-8 3-12 6-8s3 12 6 12 4-5 4.500-8" stroke="#3a78e0" stroke-width="1.700" fill="none"/><path d="M7.2 13.8L14.9 4.4" stroke="#d89838" stroke-width="3.400"/><path d="M8.1 14.5L15.8 5.1" stroke="#8a5a18" stroke-width="1"/><path d="M14.9 4.4L16.5 2.5" stroke="#e02828" stroke-width="3.400"/><path d="M5.0 16.5L8.5 14.9L5.9 12.7Z" fill="#f0e0c0" stroke="#604020" stroke-width=".4"/><path d="M14 0h6l-3 3.500z" fill="#000"/></g>
<g transform="translate(7,237.0)"><path d="M.8 2.500h9.500l3.700 2.600h-10z" fill="#eef2ff" stroke="#6c6cf8" stroke-width="1.100"/><path d="M.8 5.700h9.500l3.700 2.600h-10z" fill="#f4f4f4" stroke="#808080" stroke-width="1.100"/><path d="M.8 8.900h9.500l3.700 2.600h-10z" fill="#f4f4f4" stroke="#808080" stroke-width="1.100"/><ellipse cx="11.500" cy="17.300" rx="7" ry="1.500" fill="#50586a" opacity=".35"/><ellipse cx="10.600" cy="14.800" rx="7.300" ry="4.600" fill="#d8a888" stroke="#8a5040" stroke-width=".8"/><circle cx="8.700" cy="16.200" r="2.100" fill="#1040f0"/><circle cx="8.200" cy="15.600" r=".8" fill="#60a0ff"/><circle cx="13.300" cy="15.500" r="2" fill="#10c020"/><circle cx="12.900" cy="15" r=".7" fill="#80ff80"/><circle cx="14.100" cy="12.400" r="2.100" fill="#d81818"/><circle cx="13.700" cy="11.800" r=".8" fill="#ff8080"/><path d="M18.200 2.300l-5.700 6.500" stroke="#c06810" stroke-width="1.800" stroke-linecap="round"/><path d="M12.500 8.800l-3 3.800" stroke="#d0d0d0" stroke-width="1.700"/><path d="M9.500 12.600l-1 1.300" stroke="#303030" stroke-width="1.500"/><path d="M14 0.5h6l-3 3.500z" fill="#000"/></g>
<g transform="translate(33,237.5)"><path d="M2 17.500l5.500-13.500 12-2.500-4.500 14z" fill="#78b0f0" stroke="#2860d8" stroke-width="1.300"/><path d="M4.500 11.500l12.500-2.500M13 3l-4 14" stroke="#e8f2ff" stroke-width="1.300"/><path d="M14 0h6l-3 3.500z" fill="#000"/></g>
<g transform="translate(17,273.5)"><g transform="translate(0,0)"><path d="M-8.5 -1C-8.5 -6 -3 -8.5 2 -7.5L2 -10.0L8.5 -4.500L2 -0.500L2 -3.500C-2 -4 -4 -2.500 -4.500 0Z" fill="#86b0e8" stroke="#4a7cc8" stroke-width=".5"/><path d="M8.5 1C8.5 6 3 8.5 -2 7.5L-2 10.0L-8.5 4.500L-2 0.500L-2 3.500C2 4 4 2.500 4.500 0Z" fill="#86b0e8" stroke="#4a7cc8" stroke-width=".5"/></g><path d="M4 -10h6l-3 3.500z" fill="#000"/></g>
<g transform="translate(33,263.5)"><ellipse cx="11" cy="18" rx="7" ry="1.500" fill="#50586a" opacity=".4"/><path d="M1.500 6l8.500-3.500 8.500 3.500-8.500 3.500z" fill="#c8c8c0" stroke="#555" stroke-width=".6"/><path d="M1.500 6l8.500 3.500v9l-8.500-4.500z" fill="#8a8a84" stroke="#555" stroke-width=".6"/><path d="M18.500 6l-8.500 3.500v9l8.500-4.500z" fill="#5a5a56" stroke="#555" stroke-width=".6"/><path d="M14 0h6l-3 3.500z" fill="#000"/></g>
<g transform="translate(7,289.5)"><ellipse cx="10.500" cy="18" rx="6.500" ry="1.500" fill="#50586a" opacity=".4"/><text x="10.500" y="16.500" text-anchor="middle" font-family="Liberation Sans,sans-serif" font-weight="bold" font-size="19" fill="#5f8fd8" stroke="#3a68b0" stroke-width=".5">?</text><path d="M14 0h6l-3 3.500z" fill="#000"/></g>
<g transform="translate(33,289.5)"><path d="M2.500 4v14M18.500 4v14" stroke="#555" stroke-width="1.300"/><path d="M4 7h13" stroke="#e8e000" stroke-width="1.700"/><path d="M2.800 7l4-2.500v5zM18.200 7l-4-2.500v5z" fill="#e8e000" stroke="#909000" stroke-width=".4"/><path d="M14 0h6l-3 3.500z" fill="#000"/></g>
<g transform="translate(7,315.5)"><ellipse cx="11" cy="18" rx="7" ry="1.500" fill="#50586a" opacity=".4"/><path d="M3.500 5l2 13h9l2-13z" fill="#a8d0f0" stroke="#4878a8" stroke-width=".8"/><ellipse cx="10" cy="5" rx="6.500" ry="2" fill="#c8e0f8" stroke="#4878a8" stroke-width=".8"/><path d="M8.500 1.500h3l1 4h-5z" fill="#f0e020"/><path d="M7.500 9l5 6M12.500 9l-5 6" stroke="#e8e890" stroke-width="1.500"/><path d="M14 0h6l-3 3.500z" fill="#000"/></g>
<g transform="translate(33,315.5)"><ellipse cx="11" cy="18" rx="7" ry="1.500" fill="#50586a" opacity=".4"/><path d="M2.500 7.500l6.500-6v3.600c6 0 10 3.400 9.500 9.400-.4 2.400-1.600 3.600-2.600 4.200 1.600-4.600-1-8.400-6.900-8.200v3.600z" fill="url(#gy)" stroke="#9a9a9a" stroke-width=".5"/><path d="M14 0h6l-3 3.500z" fill="#000"/></g>
<g transform="translate(6,342)"><rect x="1.500" y="0" width="3.500" height="11" fill="#8a96a8" stroke="#4a5468" stroke-width=".6"/><path d="M1.500 11l1.700 5 1.800-5z" fill="#e8b020"/><circle cx="11.500" cy="8.500" r="6" fill="none" stroke="#7a3a20" stroke-width="1.500"/><path d="M3 8.500h17M11.500 0v17M5.500 2.500l12 12M17.500 2.500l-12 12" stroke="#7a3a20" stroke-width="1"/><circle cx="11.500" cy="8.500" r="2" fill="#f0c020"/><path d="M1 16l9-3.500 8 2-9 4z" fill="none" stroke="#ff8000" stroke-width="1.200"/><path d="M4 16.500l8-3M7 17.500l8-3M3 14.500l9 3" stroke="#ff8000" stroke-width="1"/><path d="M15 0h6l-3 3.500z" fill="#000"/></g>
<g transform="translate(33,342)"><path d="M4 10.500h11l4 4v6.500h-15z" fill="url(#pg)" stroke="#111" stroke-width="1.300"/><path d="M1 14l2-11 6 .5 1.500 2 8 .5-1 9z" fill="url(#fo)" stroke="#b08a28" stroke-width=".7"/><path d="M8 6c1-3 4-4.500 7.500-3.500l0-1.500 4 3.500-4 3.500 0-2c-2-.5-4 0-5 1.500z" fill="url(#gr)" stroke="#157a10" stroke-width=".5"/><path d="M1 14l2.500-7 15.500 1-2 7z" fill="#f8e088" stroke="#b08a28" stroke-width=".6"/></g>
<rect x="64" y="113" width="24" height="24" fill="#7d8099"/>
<rect x="92" y="113" width="24" height="24" fill="#7d8099"/>
<rect x="120" y="113" width="24" height="24" fill="#7d8099"/>
<rect x="148" y="113" width="24" height="24" fill="#7d8099"/>
<rect x="176" y="113" width="24" height="24" fill="#7d8099"/>
<rect x="204" y="113" width="24" height="24" fill="#7d8099"/>
<rect x="232" y="113" width="24" height="24" fill="#7d8099"/>
<rect x="260" y="113" width="24" height="24" fill="#7d8099"/>
<rect x="288" y="113" width="24" height="24" fill="#7d8099"/>
<rect x="316" y="113" width="24" height="24" fill="#7d8099"/>
<rect x="344" y="113" width="24" height="24" fill="#7d8099"/>
<rect x="64" y="141" width="24" height="24" fill="#7d8099"/>
<rect x="64" y="169" width="24" height="24" fill="#7d8099"/>
<rect x="64.5" y="197.5" width="23" height="23" fill="#a89a5c" stroke="#f0d060" stroke-width="1"/>
<rect x="64" y="225" width="24" height="24" fill="#7d8099"/>
<rect x="64" y="253" width="24" height="24" fill="#7d8099"/>
<path d="M68 118.500h16M68 125h16M68 131.500h16" stroke="#3a5890" stroke-width="3.200"/>
<g transform="translate(92,113)"><rect x="6.500" y="7.500" width="11" height="9" fill="url(#pg)" stroke="#aab" stroke-width=".6"/><path d="M2.5 3.5l4 4M6.5 3.5l-4 4" stroke="#38b828" stroke-width="1.300"/><path d="M17.5 3.5l4 4M21.5 3.5l-4 4" stroke="#38b828" stroke-width="1.300"/><path d="M2.5 3.5l4 4M6.5 3.5l-4 4" stroke="#38b828" stroke-width="1.300"/><path d="M17.5 3.5l4 4M21.5 3.5l-4 4" stroke="#38b828" stroke-width="1.300"/><path d="M2.5 16.5l4 4M6.5 16.5l-4 4" stroke="#38b828" stroke-width="1.300"/><path d="M17.5 16.5l4 4M21.5 16.5l-4 4" stroke="#38b828" stroke-width="1.300"/><path d="M2.5 16.5l4 4M6.5 16.5l-4 4" stroke="#38b828" stroke-width="1.300"/><path d="M17.5 16.5l4 4M21.5 16.5l-4 4" stroke="#38b828" stroke-width="1.300"/></g>
<g transform="translate(120,113)"><path d="M5 6c-1 2-1 5 0 8M8 5c-1 2-1 6 0 9" stroke="#b8c4d8" stroke-width="1.300" fill="none"/><path d="M10.652 14.388l-4.600 4.600" stroke="#8c9098" stroke-width="3" stroke-linecap="round"/><path d="M10.652 14.388l-4.600 4.600" stroke="#e4e6ea" stroke-width="1.500" stroke-linecap="round"/><circle cx="14" cy="10.5" r="6.300000000000001" fill="none" stroke="#f0f2f8" stroke-width="1"/><circle cx="14" cy="10.5" r="5.4" fill="url(#gl)" stroke="#6a94c8" stroke-width="1.400"/><path d="M12.5 7.9l4.600 2.600-4.600 2.600z" fill="#b4c4d8" stroke="#7890b4" stroke-width=".5"/></g>
<g transform="translate(148,113)"><path d="M2 15l10-6 10 4-9 7z" fill="none" stroke="#9a9aa8" stroke-width=".6"/><path d="M10.500 14v-9" stroke="#1878f0" stroke-width="1.800"/><path d="M10.500 2.500l-2.600 4.500h5.200z" fill="#1878f0"/><path d="M10.500 14l7-5" stroke="#30b030" stroke-width="1.500"/><path d="M19.500 7.500l-4.200.8 2.200 3z" fill="#30b030"/><path d="M10.500 14l7 5" stroke="#e02020" stroke-width="1.800"/><path d="M19.500 20.500l-2-4.200-2.400 3.400z" fill="#e02020"/><circle cx="10.500" cy="14" r="1.700" fill="#e8e8e8" stroke="#666" stroke-width=".5"/></g>
<path d="M188.2 116.2L179.2 119.4" stroke="#000" stroke-width="1.5" fill="none"/><path d="M188.2 116.2L197.4 119.2" stroke="#000" stroke-width="1.5" fill="none"/><path d="M179.2 119.4L188.2 123.5" stroke="#000" stroke-width="1.5" fill="none"/><path d="M197.4 119.2L188.2 123.5" stroke="#000" stroke-width="1.5" fill="none"/><path d="M179.2 119.4L179.2 128.5" stroke="#000" stroke-width="1.5" fill="none"/><path d="M197.4 119.2L197.4 128.7" stroke="#000" stroke-width="1.5" fill="none"/><path d="M188.2 123.5L188.2 134.3" stroke="#000" stroke-width="1.5" fill="none"/><path d="M179.2 128.5L188.2 134.3" stroke="#000" stroke-width="1.5" fill="none"/><path d="M197.4 128.7L188.2 134.3" stroke="#000" stroke-width="1.5" fill="none"/><path d="M188.2 116.2L188.2 125" stroke="#000" stroke-width="1.3" fill="none"/><path d="M179.2 128.5L188.2 125" stroke="#000" stroke-width="1.3" fill="none"/><path d="M197.4 128.7L188.2 125" stroke="#000" stroke-width="1.3" fill="none"/><polygon points="188.2,116.2 197.4,119.2 188.2,123.5 179.2,119.4" fill="#58ec30" stroke="#18a010" stroke-width=".8"/>
<polygon points="216.2,125 225.4,128.7 216.2,134.3 207.2,128.5" fill="#40d020" stroke="#18a010" stroke-width=".8"/><path d="M216.2 116.2L207.2 119.4" stroke="#000" stroke-width="1.5" fill="none"/><path d="M216.2 116.2L225.4 119.2" stroke="#000" stroke-width="1.5" fill="none"/><path d="M207.2 119.4L216.2 123.5" stroke="#000" stroke-width="1.5" fill="none"/><path d="M225.4 119.2L216.2 123.5" stroke="#000" stroke-width="1.5" fill="none"/><path d="M207.2 119.4L207.2 128.5" stroke="#000" stroke-width="1.5" fill="none"/><path d="M225.4 119.2L225.4 128.7" stroke="#000" stroke-width="1.5" fill="none"/><path d="M216.2 123.5L216.2 134.3" stroke="#000" stroke-width="1.5" fill="none"/><path d="M207.2 128.5L216.2 134.3" stroke="#000" stroke-width="1.5" fill="none"/><path d="M225.4 128.7L216.2 134.3" stroke="#000" stroke-width="1.5" fill="none"/><path d="M216.2 116.2L216.2 125" stroke="#000" stroke-width="1.3" fill="none"/><path d="M207.2 128.5L216.2 125" stroke="#000" stroke-width="1.3" fill="none"/><path d="M225.4 128.7L216.2 125" stroke="#000" stroke-width="1.3" fill="none"/>
<polygon points="244.2,116.2 235.2,119.4 235.2,128.5 244.2,125" fill="#28b018" stroke="#18a010" stroke-width=".8"/><path d="M244.2 116.2L235.2 119.4" stroke="#000" stroke-width="1.5" fill="none"/><path d="M244.2 116.2L253.4 119.2" stroke="#000" stroke-width="1.5" fill="none"/><path d="M235.2 119.4L244.2 123.5" stroke="#000" stroke-width="1.5" fill="none"/><path d="M253.4 119.2L244.2 123.5" stroke="#000" stroke-width="1.5" fill="none"/><path d="M235.2 119.4L235.2 128.5" stroke="#000" stroke-width="1.5" fill="none"/><path d="M253.4 119.2L253.4 128.7" stroke="#000" stroke-width="1.5" fill="none"/><path d="M244.2 123.5L244.2 134.3" stroke="#000" stroke-width="1.5" fill="none"/><path d="M235.2 128.5L244.2 134.3" stroke="#000" stroke-width="1.5" fill="none"/><path d="M253.4 128.7L244.2 134.3" stroke="#000" stroke-width="1.5" fill="none"/><path d="M244.2 116.2L244.2 125" stroke="#000" stroke-width="1.3" fill="none"/><path d="M235.2 128.5L244.2 125" stroke="#000" stroke-width="1.3" fill="none"/><path d="M253.4 128.7L244.2 125" stroke="#000" stroke-width="1.3" fill="none"/>
<path d="M272.2 116.2L263.2 119.4" stroke="#000" stroke-width="1.5" fill="none"/><path d="M272.2 116.2L281.4 119.2" stroke="#000" stroke-width="1.5" fill="none"/><path d="M263.2 119.4L272.2 123.5" stroke="#000" stroke-width="1.5" fill="none"/><path d="M281.4 119.2L272.2 123.5" stroke="#000" stroke-width="1.5" fill="none"/><path d="M263.2 119.4L263.2 128.5" stroke="#000" stroke-width="1.5" fill="none"/><path d="M281.4 119.2L281.4 128.7" stroke="#000" stroke-width="1.5" fill="none"/><path d="M272.2 123.5L272.2 134.3" stroke="#000" stroke-width="1.5" fill="none"/><path d="M263.2 128.5L272.2 134.3" stroke="#000" stroke-width="1.5" fill="none"/><path d="M281.4 128.7L272.2 134.3" stroke="#000" stroke-width="1.5" fill="none"/><path d="M272.2 116.2L272.2 125" stroke="#000" stroke-width="1.3" fill="none"/><path d="M263.2 128.5L272.2 125" stroke="#000" stroke-width="1.3" fill="none"/><path d="M281.4 128.7L272.2 125" stroke="#000" stroke-width="1.3" fill="none"/><polygon points="272.2,123.5 281.4,119.2 281.4,128.7 272.2,134.3" fill="#70f048" stroke="#18a010" stroke-width=".8"/>
<path d="M300.2 116.2L291.2 119.4" stroke="#000" stroke-width="1.5" fill="none"/><path d="M300.2 116.2L309.4 119.2" stroke="#000" stroke-width="1.5" fill="none"/><path d="M291.2 119.4L300.2 123.5" stroke="#000" stroke-width="1.5" fill="none"/><path d="M309.4 119.2L300.2 123.5" stroke="#000" stroke-width="1.5" fill="none"/><path d="M291.2 119.4L291.2 128.5" stroke="#000" stroke-width="1.5" fill="none"/><path d="M309.4 119.2L309.4 128.7" stroke="#000" stroke-width="1.5" fill="none"/><path d="M300.2 123.5L300.2 134.3" stroke="#000" stroke-width="1.5" fill="none"/><path d="M291.2 128.5L300.2 134.3" stroke="#000" stroke-width="1.5" fill="none"/><path d="M309.4 128.7L300.2 134.3" stroke="#000" stroke-width="1.5" fill="none"/><path d="M300.2 116.2L300.2 125" stroke="#000" stroke-width="1.3" fill="none"/><path d="M291.2 128.5L300.2 125" stroke="#000" stroke-width="1.3" fill="none"/><path d="M309.4 128.7L300.2 125" stroke="#000" stroke-width="1.3" fill="none"/><polygon points="291.2,119.4 300.2,123.5 300.2,134.3 291.2,128.5" fill="#28b018" stroke="#18a010" stroke-width=".8"/>
<polygon points="328.2,116.2 337.4,119.2 337.4,128.7 328.2,125" fill="#58ec30" stroke="#18a010" stroke-width=".8"/><path d="M328.2 116.2L319.2 119.4" stroke="#000" stroke-width="1.5" fill="none"/><path d="M328.2 116.2L337.4 119.2" stroke="#000" stroke-width="1.5" fill="none"/><path d="M319.2 119.4L328.2 123.5" stroke="#000" stroke-width="1.5" fill="none"/><path d="M337.4 119.2L328.2 123.5" stroke="#000" stroke-width="1.5" fill="none"/><path d="M319.2 119.4L319.2 128.5" stroke="#000" stroke-width="1.5" fill="none"/><path d="M337.4 119.2L337.4 128.7" stroke="#000" stroke-width="1.5" fill="none"/><path d="M328.2 123.5L328.2 134.3" stroke="#000" stroke-width="1.5" fill="none"/><path d="M319.2 128.5L328.2 134.3" stroke="#000" stroke-width="1.5" fill="none"/><path d="M337.4 128.7L328.2 134.3" stroke="#000" stroke-width="1.5" fill="none"/><path d="M328.2 116.2L328.2 125" stroke="#000" stroke-width="1.3" fill="none"/><path d="M319.2 128.5L328.2 125" stroke="#000" stroke-width="1.3" fill="none"/><path d="M337.4 128.7L328.2 125" stroke="#000" stroke-width="1.3" fill="none"/>
<polygon points="356.2,116.2 365.4,119.2 356.2,123.5 347.2,119.4" fill="#50e828"/><polygon points="347.2,119.4 356.2,123.5 356.2,134.3 347.2,128.5" fill="#2cb818"/><polygon points="356.2,123.5 365.4,119.2 365.4,128.7 356.2,134.3" fill="#68f040"/><polygon points="356.2,116.2 365.4,119.2 365.4,128.7 356.2,134.3 347.2,128.5 347.2,119.4" fill="none" stroke="#18a010" stroke-width="1.2"/><path d="M347.2 119.4L356.2 123.5L365.4 119.2M356.2 123.5L356.2 134.3" stroke="#18a010" stroke-width="1" fill="none"/>
<path d="M72 147.6v10.8a5.0 2.6 0 0 0 10 0v-10.8" fill="none" stroke="#222" stroke-width="1"/><ellipse cx="77.0" cy="147.6" rx="5.0" ry="2.6" fill="none" stroke="#222" stroke-width="1"/><path d="M72 158.4a5.0 2.6 0 0 1 10 0" fill="none" stroke="#222" stroke-width="0.8"/>
<path d="M72 175.6v10.8a5.0 2.6 0 0 0 10 0v-10.8" fill="none" stroke="#222" stroke-width="1"/><ellipse cx="77.0" cy="175.6" rx="5.0" ry="2.6" fill="none" stroke="#222" stroke-width="1"/>
<path d="M72 203.6v10.8a5.0 2.6 0 0 0 10 0v-10.8" fill="url(#cb)" stroke="#101828" stroke-width="1"/><ellipse cx="77.0" cy="203.6" rx="5.0" ry="2.6" fill="#4a72c8" stroke="#101828" stroke-width="1"/>
<path d="M72 231.6v10.8a5.0 2.6 0 0 0 10 0v-10.8" fill="url(#cw)" stroke="#303848" stroke-width="1"/><ellipse cx="77.0" cy="231.6" rx="5.0" ry="2.6" fill="#e4eafa" stroke="#303848" stroke-width="1"/>
<path d="M72 259.6v10.8a5.0 2.6 0 0 0 10 0v-10.8" fill="none" stroke="#222" stroke-width="1"/><ellipse cx="77.0" cy="259.6" rx="5.0" ry="2.6" fill="none" stroke="#222" stroke-width="1"/><path d="M74 260l2 12M77 260l-1 12.500M77 260l3 12M80 259.500l-.5 12.500M74 260l4.500 12" stroke="#222" stroke-width=".6" fill="none"/>
<g fill="#9aa0b0"><rect x="1336" y="1004" width="1" height="1"/><rect x="1339" y="1004" width="1" height="1"/><rect x="1337.5" y="1006" width="1" height="1"/><rect x="1340.5" y="1006" width="1" height="1"/><rect x="1336" y="1008" width="1" height="1"/><rect x="1339" y="1008" width="1" height="1"/><rect x="1337.5" y="1010" width="1" height="1"/><rect x="1340.5" y="1010" width="1" height="1"/><rect x="1336" y="1012" width="1" height="1"/><rect x="1339" y="1012" width="1" height="1"/><rect x="1337.5" y="1014" width="1" height="1"/><rect x="1340.5" y="1014" width="1" height="1"/><rect x="1336" y="1016" width="1" height="1"/><rect x="1339" y="1016" width="1" height="1"/></g>
<g fill="#9aa0b0"><rect x="1474" y="1004" width="1" height="1"/><rect x="1477" y="1004" width="1" height="1"/><rect x="1475.5" y="1006" width="1" height="1"/><rect x="1478.5" y="1006" width="1" height="1"/><rect x="1474" y="1008" width="1" height="1"/><rect x="1477" y="1008" width="1" height="1"/><rect x="1475.5" y="1010" width="1" height="1"/><rect x="1478.5" y="1010" width="1" height="1"/><rect x="1474" y="1012" width="1" height="1"/><rect x="1477" y="1012" width="1" height="1"/><rect x="1475.5" y="1014" width="1" height="1"/><rect x="1478.5" y="1014" width="1" height="1"/><rect x="1474" y="1016" width="1" height="1"/><rect x="1477" y="1016" width="1" height="1"/></g>
<g fill="#9aa0b0"><rect x="1656" y="1004" width="1" height="1"/><rect x="1659" y="1004" width="1" height="1"/><rect x="1657.5" y="1006" width="1" height="1"/><rect x="1660.5" y="1006" width="1" height="1"/><rect x="1656" y="1008" width="1" height="1"/><rect x="1659" y="1008" width="1" height="1"/><rect x="1657.5" y="1010" width="1" height="1"/><rect x="1660.5" y="1010" width="1" height="1"/><rect x="1656" y="1012" width="1" height="1"/><rect x="1659" y="1012" width="1" height="1"/><rect x="1657.5" y="1014" width="1" height="1"/><rect x="1660.5" y="1014" width="1" height="1"/><rect x="1656" y="1016" width="1" height="1"/><rect x="1659" y="1016" width="1" height="1"/></g>
<circle cx="1468" cy="1008.500" r="3.600" fill="#fff" stroke="#4a88d8" stroke-width="1.300"/><path d="M1465.500 1011.500l-4 4.500" stroke="#2a68c0" stroke-width="1.800"/>
<g transform="translate(1900.500,1009.600) scale(.86) translate(-1901,-1010)"><circle cx="1901" cy="1010" r="7.500" fill="#1020b0"/><path d="M1896 1005.500c2-2 5-2.500 7-1.500l-1 3-3 1.500-1 3 2 3-2 2c-3-2-4.500-7-2-11zM1904 1009l3-1c1 2 1 5-1 7l-2-2z" fill="#28c030"/><circle cx="1898.500" cy="1006.500" r="2.200" fill="#c8f0ff" opacity=".55"/><circle cx="1901" cy="1010" r="7.500" fill="none" stroke="#081060" stroke-width=".8"/></g>
<rect x="1182.500" y="1022.500" width="15.500" height="15.500" fill="#c8ccd8" stroke="#6a7088" stroke-width="1.200"/><g transform="translate(1190.3,1030.3)"><path d="M-6 -1C-6 -6 -3 -6 2 -5L2 -7.5L6 -4.500L2 -0.500L2 -3.500C-2 -4 -4 -2.500 -4.500 0Z" fill="#e86878" stroke="#c03848" stroke-width=".5"/><path d="M6 1C6 6 3 6 -2 5L-2 7.5L-6 4.500L-2 0.500L-2 3.500C2 4 4 2.500 4.500 0Z" fill="#e89098" stroke="#c03848" stroke-width=".5"/></g>
<rect x="1212" y="1021" width="18" height="18" fill="#ffe680"/><path d="M1214 1023l4 2 1-3.500 2 3.500 4-1-2 4 3 3-5 0-2 4-2-4-5-1 3.500-2.500z" fill="#c850e0"/><circle cx="1218.500" cy="1026.500" r="2.500" fill="#f8f040"/><path d="M1219.500 1027.500l1 9 2.200-2.200 3 4 1.800-1.400-3-4 3-.6z" fill="#e8dcd0" stroke="#806850" stroke-width=".7"/>
<rect x="1246.500" y="1029.500" width="9.500" height="8" fill="#e8eefc" stroke="#7888b8" stroke-width=".8"/><path d="M1249 1031.500v5M1246.500 1034h9.500M1253 1031.500v5" stroke="#2868e0" stroke-width="1"/><path d="M1247 1028.500l5-5 7-.5 1 2.500-1.500 3-5 2z" fill="#e8b868" stroke="#a87830" stroke-width=".6"/><path d="M1249.500 1027l3-3M1251.500 1028l3-3" stroke="#a87830" stroke-width=".5"/>
<ellipse cx="1284" cy="1037" rx="5" ry="1.300" fill="#50586a" opacity=".5"/><text x="1283.500" y="1036.500" text-anchor="middle" font-family="Liberation Sans,sans-serif" font-weight="bold" font-size="17" fill="#5f8fd8" stroke="#3a68b0" stroke-width=".4">?</text>
<path d="M1306 1025.16l4.75 -2.66l4.75 2.66l-4.75 2.66z" fill="#78b0f8" stroke="#1838a0" stroke-width=".5"/><path d="M1306 1025.16l4.75 2.66v5.89l-4.75 -2.66z" fill="#3a78e0" stroke="#1838a0" stroke-width=".5"/><path d="M1315.5 1025.16l-4.75 2.66v5.89l4.75 -2.66z" fill="#2858b8" stroke="#1838a0" stroke-width=".5"/><path d="M1313 1030.66l4.75 -2.66l4.75 2.66l-4.75 2.66z" fill="#98b8b8" stroke="#102828" stroke-width=".5"/><path d="M1313 1030.66l4.75 2.66v5.89l-4.75 -2.66z" fill="#587878" stroke="#102828" stroke-width=".5"/><path d="M1322.5 1030.66l-4.75 2.66v5.89l4.75 -2.66z" fill="#385858" stroke="#102828" stroke-width=".5"/><path d="M1305.500 1034h7M1306 1031l6.500 3M1306 1037l6.500-3" stroke="#f01020" stroke-width="1.400"/>
<rect x="1336" y="1021" width="18" height="18" fill="#ffe680"/><path d="M1338 1026l7-2.500 7 2.500-7 2.500z" fill="#f030f0"/><path d="M1338 1026l7 2.500v8.500l-7-3.500z" fill="#88a8a0" stroke="#2858d8" stroke-width="1.200"/><path d="M1352 1026l-7 2.500v8.500l7-3.500z" fill="#a8c0b0" stroke="#2858d8" stroke-width="1.200"/><path d="M1338 1026l7-2.500 7 2.500-7 2.500z" fill="#f030f0" stroke="#c020c0" stroke-width=".6"/>
<rect x="1371" y="1029" width="9.500" height="9" fill="#f0f0f0" stroke="#4a6850" stroke-width="1.200"/>
<rect x="1431" y="1023" width="14.500" height="14" fill="#e0e4f0" stroke="#58607a" stroke-width="1.200"/><path d="M1438 1023v14M1431 1030h14.500" stroke="#58607a" stroke-width="1.200"/>
<ellipse cx="1405" cy="1037.500" rx="15" ry="2.500" fill="#c48a4a" opacity=".75"/><path d="M1406.500 974c-1-4-3-6.500-6-8.500" stroke="#6a3410" stroke-width="2" fill="none" stroke-linecap="round"/><ellipse cx="1400.500" cy="966.800" rx="3" ry="2" fill="#6a3410" transform="rotate(35 1400.500 966.800)"/><path d="M1408.500 974c0-2.500.3-4.500 1.200-6.500" stroke="#a86428" stroke-width="2.400" fill="none" stroke-linecap="round"/><ellipse cx="1392.500" cy="1021.500" rx="5.500" ry="3.800" fill="#fff35a" stroke="#e8c830" stroke-width=".6" transform="rotate(-25 1392.500 1021.500)"/><ellipse cx="1421" cy="1021" rx="5.500" ry="3.800" fill="#fff35a" stroke="#e8c830" stroke-width=".6" transform="rotate(25 1421 1021)"/><path d="M1397 1016h18l2 14-1.500 6h-4l-.5-3h-5l-.5 3h-4.500l-1-6z" fill="#fff35a"/><path d="M1394 1017c3 3 21 3 25 0l-2 3c-5 2-16 2-21 0z" fill="#c48a4a" stroke="#8a4a1c" stroke-width=".5"/><path d="M1412 1019l-10 10" stroke="#8a4a1c" stroke-width="1.200"/><circle cx="1390.500" cy="978.500" r="6.200" fill="#c48a4a" stroke="#8a4a1c" stroke-width=".8"/><circle cx="1423" cy="978.500" r="6.200" fill="#c48a4a" stroke="#8a4a1c" stroke-width=".8"/><circle cx="1390.200" cy="979" r="3" fill="#f0b8a0"/><circle cx="1423.300" cy="979" r="3" fill="#f0b8a0"/><ellipse cx="1406.500" cy="998" rx="26.500" ry="23.500" fill="#c48a4a" stroke="#8a4a1c" stroke-width=".9"/><ellipse cx="1405.800" cy="1000" rx="21" ry="17.500" fill="#fff35a" stroke="#8a4a1c" stroke-width=".9"/><circle cx="1395.500" cy="994" r="1.500" fill="#5a2808"/><circle cx="1416.500" cy="993.500" r="1.500" fill="#5a2808"/><ellipse cx="1406.200" cy="997.500" rx="1.400" ry=".8" fill="#8a4a1c"/><ellipse cx="1390" cy="1000" rx="3.600" ry="2.600" fill="#ffa830" opacity=".85"/><ellipse cx="1421" cy="1000" rx="3.600" ry="2.600" fill="#ffa830" opacity=".85"/><circle cx="1392.500" cy="1023" r="2.300" fill="#c48a4a" stroke="#8a4a1c" stroke-width=".5"/><circle cx="1402" cy="1023.500" r="2.300" fill="#c48a4a" stroke="#8a4a1c" stroke-width=".5"/><ellipse cx="1397" cy="1029" rx="8" ry="6.500" fill="#c48a4a" stroke="#8a4a1c" stroke-width=".7"/><circle cx="1393" cy="1028.500" r="1.400" fill="#ff88c8"/><circle cx="1400" cy="1029.500" r="1.400" fill="#ff88c8"/><circle cx="1367.500" cy="1005.500" r="8.300" fill="#8a6052"/><text x="1367.500" y="1010.300" text-anchor="middle" font-family="Liberation Sans,sans-serif" font-size="13" fill="#fff">A</text><circle cx="1374.500" cy="1026.300" r="8.300" fill="#8a6052"/><path d="M1369 1023.500l3.500-2.500c1 1.300 3 1.300 4 0l3.500 2.500-1.800 2.700-1.400-.9v6h-4.600v-6l-1.400.9z" fill="#fff"/><text x="1445.5" y="988.5" text-anchor="middle" font-family="Liberation Sans,sans-serif" font-weight="bold" font-size="19" stroke-linejoin="round" transform="rotate(5 1445 982)" fill="#d8a070" stroke="#d8a070" stroke-width="4.6">W</text><text x="1445.5" y="988.5" text-anchor="middle" font-family="Liberation Sans,sans-serif" font-weight="bold" font-size="19" stroke-linejoin="round" transform="rotate(5 1445 982)" fill="#fff" stroke="#fff" stroke-width="2.6">W</text><circle cx="1440" cy="977" r="1.300" fill="#e0a868"/><circle cx="1449" cy="975.5" r="1.300" fill="#e0a868"/><circle cx="1444" cy="985" r="1.300" fill="#e0a868"/><circle cx="1452" cy="983" r="1.300" fill="#e0a868"/><circle cx="1438" cy="992.500" r="3.400" fill="#c48a4a"/><circle cx="1455" cy="993" r="3.400" fill="#c48a4a"/><circle cx="1438" cy="993" r="1.600" fill="#f0b8a0"/><circle cx="1455" cy="993.500" r="1.600" fill="#f0b8a0"/><text x="1446.5" y="1010.5" text-anchor="middle" font-family="Liberation Sans,sans-serif" font-weight="bold" font-size="20" stroke-linejoin="round" transform="rotate(0 1446 1002)" fill="#a87038" stroke="#a87038" stroke-width="4.4">O</text><text x="1446.5" y="1010.5" text-anchor="middle" font-family="Liberation Sans,sans-serif" font-weight="bold" font-size="20" stroke-linejoin="round" transform="rotate(0 1446 1002)" fill="#c48a4a" stroke="#c48a4a" stroke-width="3.2">O</text><ellipse cx="1446.500" cy="1003.300" rx="2.600" ry="3.800" fill="#fff"/><text x="1447.5" y="1030.5" text-anchor="middle" font-family="Liberation Sans,sans-serif" font-weight="bold" font-size="19" stroke-linejoin="round" transform="rotate(-8 1447 1024)" fill="#d8b828" stroke="#d8b828" stroke-width="4.6">W</text><text x="1447.5" y="1030.5" text-anchor="middle" font-family="Liberation Sans,sans-serif" font-weight="bold" font-size="19" stroke-linejoin="round" transform="rotate(-8 1447 1024)" fill="#fff35a" stroke="#fff35a" stroke-width="2.6">W</text>
</svg>
</body></html>
